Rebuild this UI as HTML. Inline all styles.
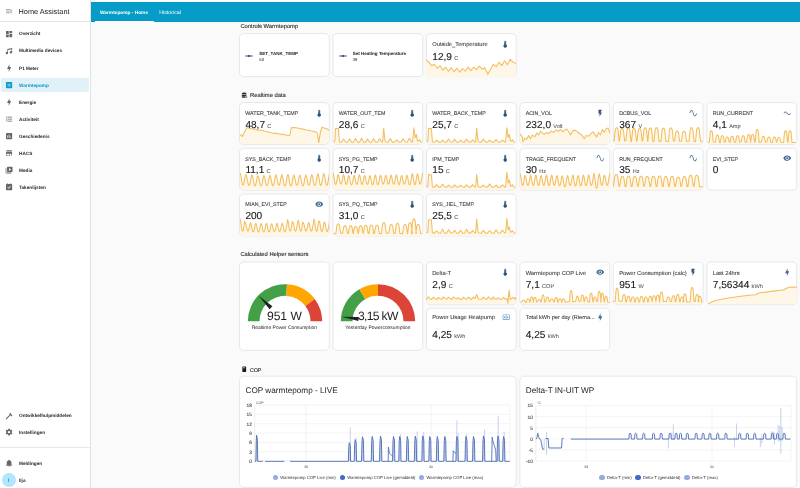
<!DOCTYPE html>
<html><head><meta charset="utf-8"><title>Home Assistant</title>
<style>
html,body{margin:0;padding:0}
#w{will-change:transform;position:absolute;left:0;top:0;width:800px;height:488px;overflow:hidden}
body{text-rendering:geometricPrecision;width:800px;height:488px;overflow:hidden;background:#fafafa;font-family:"Liberation Sans",sans-serif;color:#212121;position:relative}
#top{position:absolute;left:0;top:0;width:800px;height:2px;background:#fdfdfd}
#hdr{position:absolute;left:90.3px;top:2px;width:709.7px;height:19.7px;background:#069cc8;box-shadow:0 0.3px 0.8px rgba(0,0,0,0.22)}
#hdr .t1{position:absolute;left:9.7px;top:9.3px;transform:translateY(0.45px);font-size:4.8px;font-weight:bold;color:#fff;white-space:nowrap;line-height:6px}
#hdr .t2{position:absolute;left:68.9px;top:7.9px;transform:translateY(0.45px);font-size:5.3px;color:#fff;white-space:nowrap;line-height:6px}
#hdr .ind{position:absolute;left:4.6px;top:19px;width:59px;height:0.9px;background:#fff}
#sb{position:absolute;left:0;top:0;width:89.8px;height:488px;background:#fff;border-right:0.5px solid #e2e2e2}
#sb .hd{position:absolute;left:0;top:0;width:90px;height:21.3px;border-bottom:0.5px solid #e4e4e4}
#sb .ttl{position:absolute;left:18.5px;top:7.2px;font-size:7.35px;color:#212121;white-space:nowrap;line-height:9px}
.si{position:absolute;left:4.8px;width:8.2px;height:8.2px}
.st{position:absolute;left:19px;margin-top:0.9px;font-size:4.7px;font-weight:bold;color:#2a2a2a;white-space:nowrap;line-height:8px}
.sel{position:absolute;left:1.2px;width:87.400px;height:13.6px;background:#e0f2f8;border-radius:1.4px}
.div{position:absolute;left:0;width:90px;height:0.5px;background:#e8e8e8}
.av{position:absolute;left:1.9px;top:473.0px;width:13.8px;height:13.8px;border-radius:50%;background:#b3e5fc;color:#0d9ac4;font-size:5px;text-align:center;line-height:16.6px;font-weight:bold;overflow:hidden}
.sh{position:absolute;font-size:5.8px;color:#1f1f1f;-webkit-text-stroke:0.1px #1f1f1f;white-space:nowrap;line-height:7px}
.card{position:absolute;border-radius:4.2px;overflow:hidden}
#bg{position:absolute;left:0;top:0}
#bg rect{fill:#fff;stroke:#dedede;stroke-width:0.7}
.sp{position:absolute;left:0;top:0}
.ct{position:absolute;left:5.8px;top:8.6px;font-size:5.3px;color:#3e3e3e;-webkit-text-stroke:0.09px #3e3e3e;white-space:nowrap;line-height:7px}
.ic{position:absolute;right:5.7px;top:6.2px;width:8.4px;height:8.4px}
.cv{position:absolute;left:5.9px;top:15.7px;white-space:nowrap;line-height:12px}
.cv .v{font-size:10.1px;color:#1a1a1a;-webkit-text-stroke:0.12px #1a1a1a}
.cv .u{font-size:5.6px;color:#5a5a5a;-webkit-text-stroke:0.06px #5a5a5a;margin-left:2.3px}
.ng .ct{top:7.4px}
.ng .ic{top:5.2px}
.ng .cv{top:19.3px}
.ti{position:absolute;left:5.6px;top:17.95px;width:8px;height:8px}
.tn{position:absolute;left:19.7px;top:17.5px;font-size:4.55px;font-weight:bold;color:#212121;white-space:nowrap;line-height:6px}
.ts{position:absolute;left:19.8px;top:23.1px;font-size:4.2px;color:#1f1f1f;white-space:nowrap;line-height:5px}
.g{position:absolute;left:0;top:0}
.gv{position:absolute;left:0;width:89.8px;top:46.6px;text-align:center;font-size:12.1px;color:#1c1c1c;line-height:14px;white-space:nowrap}
.gl{position:absolute;left:0;width:89.8px;top:63.6px;text-align:center;font-size:4.95px;color:#212121;line-height:6px;white-space:nowrap}
.cht{position:absolute;left:6.0px;top:9.6px;font-size:8.2px;color:#1c1c1c;white-space:nowrap;line-height:10px}
.chs{position:absolute;left:0;top:0}
.ax{text-rendering:geometricPrecision;font-size:4.8px;fill:#474747;stroke:#474747;stroke-width:0.1px;font-family:"Liberation Sans",sans-serif}
.ax2{text-rendering:geometricPrecision;font-size:3.5px;fill:#444;font-family:"Liberation Sans",sans-serif}
.ld{position:absolute;top:98.7px;width:5.2px;height:5.2px;border-radius:50%}
.lt{position:absolute;top:98.9px;font-size:4.25px;color:#333;white-space:nowrap;line-height:5px}
</style></head><body><div id="w">
<div id="top"></div>
<div id="hdr"><div class="t1">Warmtepomp - Home</div><div class="t2">Historical</div><div class="ind"></div></div>
<div id="sb"><div class="hd"></div>
<svg style="position:absolute;left:4.8px;top:7.3px;width:8.4px;height:8.4px" viewBox="0 0 24 24"><path fill="#8e8e8e" d="M21 15.610L19.590 17l-5.010-5 5.010-5L21 8.390 17.440 12 21 15.610M3 6h13v2H3V6m0 7v-2h10v2H3m0 5v-2h13v2H3z"/></svg>
<div class="ttl">Home Assistant</div>
<svg class="si" style="top:29.5px" viewBox="0 0 24 24" fill="#666"><path d="M13 3v6h8V3m-8 18h8V11h-8M3 21h8v-6H3m0-2h8V3H3v10z"/></svg><div class="st" style="top:29.5px;">Overzicht</div><svg class="si" style="top:46.6px" viewBox="0 0 24 24" fill="#666"><path d="M21 3v12.500a3.500 3.500 0 1 1-2-3.160V6.470L9 8.600v8.900a3.500 3.500 0 1 1-2-3.160V6l14-3z"/></svg><div class="st" style="top:46.6px;">Multimedia devices</div><svg class="si" style="top:63.7px" viewBox="0 0 24 24" fill="#666"><path d="M11 15H6l7-14v8h5l-7 14v-8z"/></svg><div class="st" style="top:63.7px;">P1 Meter</div><div class="sel" style="top:78.0px"></div><svg class="si" style="top:80.8px" viewBox="0 0 24 24" fill="#0d9ac4"><path d="M19 3H5a2 2 0 0 0-2 2v14a2 2 0 0 0 2 2h14a2 2 0 0 0 2-2V5a2 2 0 0 0-2-2z"/><path fill="#5cc0dc" d="M7.500 7.500h9v9h-9z"/></svg><div class="st" style="top:80.8px;color:#0d9ac4;">Warmtepomp</div><svg class="si" style="top:97.9px" viewBox="0 0 24 24" fill="#666"><path d="M11 15H6l7-14v8h5l-7 14v-8z"/></svg><div class="st" style="top:97.9px;">Energie</div><svg class="si" style="top:115.0px" viewBox="0 0 24 24" fill="#666"><path d="M7 5h14v2H7V5m0 8v-2h14v2H7M4 4.500A1.500 1.500 0 1 1 4 7.500 1.500 1.500 0 0 1 4 4.500m0 6a1.500 1.500 0 1 1 0 3 1.500 1.500 0 0 1 0-3M7 19v-2h14v2H7m-3-3.500a1.500 1.500 0 1 1 0 3 1.500 1.500 0 0 1 0-3z"/></svg><div class="st" style="top:115.0px;">Activiteit</div><svg class="si" style="top:132.1px" viewBox="0 0 24 24" fill="#666"><path d="M19 3H5a2 2 0 0 0-2 2v14a2 2 0 0 0 2 2h14a2 2 0 0 0 2-2V5a2 2 0 0 0-2-2M9 17H7v-7h2v7m4 0h-2V7h2v10m4 0h-2v-4h2v4z"/></svg><div class="st" style="top:132.1px;">Geschiedenis</div><svg class="si" style="top:149.2px" viewBox="0 0 24 24" fill="#666"><path d="M20 4H4v2h16V4m1 10v-2l-1-5H4l-1 5v2h1v6h10v-6h4v6h2v-6h1m-9 4H6v-4h6v4z"/></svg><div class="st" style="top:149.2px;">HACS</div><svg class="si" style="top:166.3px" viewBox="0 0 24 24" fill="#666"><path d="M4 6H2v14a2 2 0 0 0 2 2h14v-2H4V6m16-4H8a2 2 0 0 0-2 2v12a2 2 0 0 0 2 2h12a2 2 0 0 0 2-2V4a2 2 0 0 0-2-2m-8 12.500v-9l6 4.500-6 4.500z"/></svg><div class="st" style="top:166.3px;">Media</div><svg class="si" style="top:183.4px" viewBox="0 0 24 24" fill="#666"><path d="M19 3h-1V1h-2v2H8V1H6v2H5a2 2 0 0 0-2 2v14a2 2 0 0 0 2 2h14a2 2 0 0 0 2-2V5a2 2 0 0 0-2-2m-8.500 14L7 13.500l1.400-1.400 2.100 2.100 5.100-5.100L17 10.500 10.500 17z"/></svg><div class="st" style="top:183.4px;">Takenlijsten</div><svg class="si" style="top:411.5px" viewBox="0 0 24 24" fill="#666"><path d="M2 19.630L13.430 8.200l-.71-.71 1.420-1.410L12 3.890c1.200-1.190 3.090-1.190 4.270 0l3.600 3.610-1.420 1.410h2.840l.71.710-3.550 3.590-.71-.71V9.620l-1.470 1.420-.71-.71L4.130 21.760 2 19.630z"/></svg><div class="st" style="top:411.5px;">Ontwikkelhulpmiddelen</div><svg class="si" style="top:428.3px" viewBox="0 0 24 24" fill="#666"><path d="M12 15.500A3.500 3.500 0 1 1 12 8.500a3.500 3.500 0 0 1 0 7m7.430-2.530c.04-.32.070-.64.070-.97s-.03-.66-.07-1l2.110-1.630c.19-.15.240-.42.120-.64l-2-3.460c-.12-.22-.39-.31-.61-.22l-2.490 1c-.52-.39-1.060-.73-1.690-.98l-.37-2.650A.506.506 0 0 0 14 2h-4c-.25 0-.46.180-.5.420l-.37 2.650c-.63.250-1.170.590-1.690.98l-2.490-1c-.22-.09-.49 0-.61.220l-2 3.460c-.13.220-.07.490.12.640L4.570 11c-.04.340-.07.670-.07 1s.03.650.07.970l-2.110 1.660c-.19.150-.25.420-.12.640l2 3.460c.12.220.39.300.61.220l2.490-1.010c.52.400 1.060.740 1.690.99l.37 2.650c.04.240.25.420.5.420h4c.25 0 .46-.18.500-.42l.37-2.650c.63-.26 1.170-.59 1.690-.99l2.490 1.010c.22.080.49 0 .61-.22l2-3.460c.12-.22.070-.49-.12-.64l-2.110-1.660z"/></svg><div class="st" style="top:428.3px;">Instellingen</div><svg class="si" style="top:459.0px" viewBox="0 0 24 24" fill="#666"><path d="M21 19v1H3v-1l2-2v-6c0-3.100 2.030-5.830 5-6.710V4a2 2 0 1 1 4 0v.290c2.970.880 5 3.610 5 6.710v6l2 2m-7 2a2 2 0 1 1-4 0"/></svg><div class="st" style="top:459.0px;">Meldingen</div>
<div class="div" style="top:447.1px"></div>
<div class="av">I</div>
<div class="st" style="top:476.4px">Ilja</div>
</div>
<svg id="bg" width="800" height="488" viewBox="0 0 800 488"><rect x="426.40" y="33.60" width="89.80" height="43.00" rx="4.2"/><rect x="239.50" y="102.55" width="89.80" height="41.85" rx="4.2"/><rect x="332.95" y="102.55" width="89.80" height="41.85" rx="4.2"/><rect x="426.40" y="102.55" width="89.80" height="41.85" rx="4.2"/><rect x="519.85" y="102.55" width="89.80" height="41.85" rx="4.2"/><rect x="613.35" y="102.55" width="89.80" height="41.85" rx="4.2"/><rect x="706.90" y="102.55" width="89.80" height="41.85" rx="4.2"/><rect x="239.50" y="148.30" width="89.80" height="41.85" rx="4.2"/><rect x="332.95" y="148.30" width="89.80" height="41.85" rx="4.2"/><rect x="426.40" y="148.30" width="89.80" height="41.85" rx="4.2"/><rect x="519.85" y="148.30" width="89.80" height="41.85" rx="4.2"/><rect x="613.35" y="148.30" width="89.80" height="41.85" rx="4.2"/><rect x="706.90" y="148.30" width="89.80" height="41.85" rx="4.2"/><rect x="239.50" y="194.00" width="89.80" height="41.85" rx="4.2"/><rect x="332.95" y="194.00" width="89.80" height="41.85" rx="4.2"/><rect x="426.40" y="194.00" width="89.80" height="41.85" rx="4.2"/><rect x="426.40" y="262.00" width="89.80" height="42.80" rx="4.2"/><rect x="519.85" y="262.00" width="89.80" height="42.80" rx="4.2"/><rect x="613.35" y="262.00" width="89.80" height="42.80" rx="4.2"/><rect x="706.90" y="262.00" width="89.80" height="42.80" rx="4.2"/><rect x="426.40" y="308.30" width="89.80" height="41.95" rx="4.2"/><rect x="519.85" y="308.30" width="89.80" height="41.95" rx="4.2"/><rect x="239.50" y="33.60" width="89.80" height="43.00" rx="4.2"/><rect x="332.95" y="33.60" width="89.80" height="43.00" rx="4.2"/><rect x="239.50" y="262.00" width="89.80" height="88.25" rx="4.2"/><rect x="332.95" y="262.00" width="89.80" height="88.25" rx="4.2"/><rect x="239.50" y="376.20" width="276.70" height="111.20" rx="4.2"/><rect x="519.85" y="376.20" width="276.85" height="111.20" rx="4.2"/></svg>
<div class="sh" style="left:240.4px;top:24.4px">Controls Warmtepomp</div>
<svg style="position:absolute;left:241.3px;top:91.6px;width:6.6px;height:6.6px" viewBox="0 0 24 24"><path fill="#2e2e2e" d="M3 7c0-3 3.500-5 8.500-5S20 4 20 7v2H3zM3 10.500h17V14c-2.500-.5-5 1-5.500 3.500H3zM3 19h11.500c.3 1 .8 1.800 1.500 2.500H6c-2 0-3-1-3-2.500z"/><circle cx="18.500" cy="18" r="2.800" fill="none" stroke="#2e2e2e" stroke-width="1.600"/><path stroke="#2e2e2e" stroke-width="2" d="M20.500 20.200l3 3"/></svg>
<div class="sh" style="left:250px;top:92.9px">Realtime data</div>
<div class="sh" style="left:240.4px;top:252.3px">Calculated Helper sensors</div>
<svg style="position:absolute;left:240.9px;top:365.6px;width:6.5px;height:6.5px" viewBox="0 0 24 24"><path fill="#1c1c1c" d="M7 1.500h10a2 2 0 0 1 2 2v17a2 2 0 0 1-2 2H7a2 2 0 0 1-2-2v-17a2 2 0 0 1 2-2m1.500 3.500v3h5V5z"/></svg>
<div class="sh" style="left:250px;top:367.5px;font-size:5.35px;letter-spacing:-0.1px">COP</div>
<div class="card" style="left:426.40px;top:33.60px;width:89.80px;height:43.00px"><svg class="sp" width="89.8" height="43" viewBox="0 0 89.8 43"><path d="M0.00,25.70 L2.81,28.20 L5.61,31.70 L8.42,30.20 L11.22,34.20 L14.03,31.70 L16.84,36.20 L19.64,33.20 L22.45,37.20 L25.26,33.70 L28.06,37.70 L30.87,34.20 L33.67,38.20 L36.48,34.70 L39.29,37.20 L42.09,33.20 L44.90,36.70 L47.71,33.20 L50.51,35.70 L53.32,32.20 L56.12,35.20 L58.93,33.70 L61.74,40.20 L64.54,35.20 L67.35,30.20 L70.16,32.70 L72.96,28.20 L75.77,31.70 L78.58,26.70 L81.38,30.70 L84.19,25.20 L86.99,28.20 L89.80,29.20 L89.80,44.00 L0,44.00 Z" fill="#fef6e7"/><path d="M0.00,25.70 L2.81,28.20 L5.61,31.70 L8.42,30.20 L11.22,34.20 L14.03,31.70 L16.84,36.20 L19.64,33.20 L22.45,37.20 L25.26,33.70 L28.06,37.70 L30.87,34.20 L33.67,38.20 L36.48,34.70 L39.29,37.20 L42.09,33.20 L44.90,36.70 L47.71,33.20 L50.51,35.70 L53.32,32.20 L56.12,35.20 L58.93,33.70 L61.74,40.20 L64.54,35.20 L67.35,30.20 L70.16,32.70 L72.96,28.20 L75.77,31.70 L78.58,26.70 L81.38,30.70 L84.19,25.20 L86.99,28.20 L89.80,29.20" fill="none" stroke="#f3bd5c" stroke-width="1.05" stroke-linejoin="round" stroke-linecap="round"/></svg><div class="ct" style="font-size:5.78px;margin-top:0.3px;">Outside_Temperature</div><svg class="ic" style="margin-right:0.7px" viewBox="0 0 24 24"><path fill="#5580aa" d="M15 13V5a3 3 0 0 0-6 0v8a5 5 0 1 0 6 0z"/><circle cx="12" cy="17" r="4.300" fill="#31506f"/><path fill="#31506f" d="M10.800 8h2.400v8h-2.400z"/></svg><div class="cv" style="margin-top:1px"><span class="v">12,9</span><span class="u">C</span></div></div>
<div class="card" style="left:239.50px;top:102.55px;width:89.80px;height:41.85px"><svg class="sp" width="89.8" height="41.85" viewBox="0 0 89.8 41.85"><path d="M0.00,31.50 L2.50,33.40 L4.50,29.00 L6.90,24.60 L9.00,25.30 L12.50,25.90 L15.00,26.00 L18.00,27.20 L21.00,27.30 L23.70,28.00 L27.00,28.60 L30.00,29.50 L33.70,30.30 L37.00,30.40 L40.00,31.20 L43.00,31.40 L46.20,32.00 L48.70,32.80 L50.00,32.00 L51.20,24.80 L54.00,24.50 L57.50,25.00 L60.00,25.80 L62.50,25.90 L66.00,27.00 L69.00,27.30 L71.20,28.00 L74.00,28.60 L76.20,29.10 L77.50,30.50 L78.70,39.60 L80.30,30.00 L81.90,24.20 L84.00,24.90 L86.50,25.60 L88.50,26.80 L89.80,27.20 L89.80,42.85 L0,42.85 Z" fill="#fef6e7"/><path d="M0.00,31.50 L2.50,33.40 L4.50,29.00 L6.90,24.60 L9.00,25.30 L12.50,25.90 L15.00,26.00 L18.00,27.20 L21.00,27.30 L23.70,28.00 L27.00,28.60 L30.00,29.50 L33.70,30.30 L37.00,30.40 L40.00,31.20 L43.00,31.40 L46.20,32.00 L48.70,32.80 L50.00,32.00 L51.20,24.80 L54.00,24.50 L57.50,25.00 L60.00,25.80 L62.50,25.90 L66.00,27.00 L69.00,27.30 L71.20,28.00 L74.00,28.60 L76.20,29.10 L77.50,30.50 L78.70,39.60 L80.30,30.00 L81.90,24.20 L84.00,24.90 L86.50,25.60 L88.50,26.80 L89.80,27.20" fill="none" stroke="#f3bd5c" stroke-width="1.05" stroke-linejoin="round" stroke-linecap="round"/></svg><div class="ct">WATER_TANK_TEMP</div><svg class="ic" style="margin-right:0.7px" viewBox="0 0 24 24"><path fill="#5580aa" d="M15 13V5a3 3 0 0 0-6 0v8a5 5 0 1 0 6 0z"/><circle cx="12" cy="17" r="4.300" fill="#31506f"/><path fill="#31506f" d="M10.800 8h2.400v8h-2.400z"/></svg><div class="cv"><span class="v">48,7</span><span class="u">C</span></div></div>
<div class="card" style="left:332.95px;top:102.55px;width:89.80px;height:41.85px"><svg class="sp" width="89.8" height="41.85" viewBox="0 0 89.8 41.85"><path d="M0.00,38.80 L1.80,38.30 L2.60,25.20 L5.40,25.60 L6.40,39.00 L8.50,39.25 L10.60,35.99 L12.70,39.19 L14.50,39.18 L16.60,35.86 L18.70,39.28 L20.50,39.30 L22.60,35.50 L24.70,39.22 L26.50,39.25 L28.60,35.23 L30.70,39.16 L32.50,39.13 L34.60,36.11 L36.70,39.11 L38.50,39.27 L40.60,35.84 L42.70,39.04 L44.50,39.20 L46.60,35.66 L48.70,39.10 L49.60,39.00 L50.70,25.40 L52.00,37.80 L53.00,39.10 L55.09,39.29 L57.33,35.63 L59.56,39.12 L61.47,39.24 L63.70,36.87 L65.93,39.04 L67.84,39.21 L70.08,35.70 L72.31,39.04 L74.22,39.16 L76.45,35.35 L78.68,39.18 L79.60,38.80 L80.90,24.80 L82.20,34.50 L83.40,31.50 L84.60,38.30 L86.50,36.80 L88.00,39.00 L89.80,39.30 L89.80,42.85 L0,42.85 Z" fill="#fef6e7"/><path d="M0.00,38.80 L1.80,38.30 L2.60,25.20 L5.40,25.60 L6.40,39.00 L8.50,39.25 L10.60,35.99 L12.70,39.19 L14.50,39.18 L16.60,35.86 L18.70,39.28 L20.50,39.30 L22.60,35.50 L24.70,39.22 L26.50,39.25 L28.60,35.23 L30.70,39.16 L32.50,39.13 L34.60,36.11 L36.70,39.11 L38.50,39.27 L40.60,35.84 L42.70,39.04 L44.50,39.20 L46.60,35.66 L48.70,39.10 L49.60,39.00 L50.70,25.40 L52.00,37.80 L53.00,39.10 L55.09,39.29 L57.33,35.63 L59.56,39.12 L61.47,39.24 L63.70,36.87 L65.93,39.04 L67.84,39.21 L70.08,35.70 L72.31,39.04 L74.22,39.16 L76.45,35.35 L78.68,39.18 L79.60,38.80 L80.90,24.80 L82.20,34.50 L83.40,31.50 L84.60,38.30 L86.50,36.80 L88.00,39.00 L89.80,39.30" fill="none" stroke="#f3bd5c" stroke-width="1.05" stroke-linejoin="round" stroke-linecap="round"/></svg><div class="ct">WATER_OUT_TEM</div><svg class="ic" style="margin-right:0.7px" viewBox="0 0 24 24"><path fill="#5580aa" d="M15 13V5a3 3 0 0 0-6 0v8a5 5 0 1 0 6 0z"/><circle cx="12" cy="17" r="4.300" fill="#31506f"/><path fill="#31506f" d="M10.800 8h2.400v8h-2.400z"/></svg><div class="cv"><span class="v">28,6</span><span class="u">C</span></div></div>
<div class="card" style="left:426.40px;top:102.55px;width:89.80px;height:41.85px"><svg class="sp" width="89.8" height="41.85" viewBox="0 0 89.8 41.85"><path d="M0.00,38.80 L1.80,38.30 L2.60,25.20 L5.40,25.60 L6.40,39.00 L8.50,39.25 L10.60,37.05 L12.70,39.18 L14.50,39.27 L16.60,37.10 L18.70,39.18 L20.50,39.12 L22.60,36.00 L24.70,39.07 L26.50,39.26 L28.60,36.39 L30.70,39.22 L32.50,39.27 L34.60,37.04 L36.70,39.24 L38.50,39.11 L40.60,35.96 L42.70,39.06 L44.50,39.14 L46.60,36.91 L48.70,39.21 L49.60,39.00 L50.70,25.40 L52.00,37.80 L53.00,39.10 L55.09,39.17 L57.33,36.10 L59.56,39.04 L61.47,39.12 L63.70,37.07 L65.93,39.12 L67.84,39.17 L70.08,36.44 L72.31,39.25 L74.22,39.21 L76.45,37.07 L78.68,39.02 L79.60,38.80 L80.90,24.80 L82.20,34.50 L83.40,31.50 L84.60,38.30 L86.50,36.80 L88.00,39.00 L89.80,39.30 L89.80,42.85 L0,42.85 Z" fill="#fef6e7"/><path d="M0.00,38.80 L1.80,38.30 L2.60,25.20 L5.40,25.60 L6.40,39.00 L8.50,39.25 L10.60,37.05 L12.70,39.18 L14.50,39.27 L16.60,37.10 L18.70,39.18 L20.50,39.12 L22.60,36.00 L24.70,39.07 L26.50,39.26 L28.60,36.39 L30.70,39.22 L32.50,39.27 L34.60,37.04 L36.70,39.24 L38.50,39.11 L40.60,35.96 L42.70,39.06 L44.50,39.14 L46.60,36.91 L48.70,39.21 L49.60,39.00 L50.70,25.40 L52.00,37.80 L53.00,39.10 L55.09,39.17 L57.33,36.10 L59.56,39.04 L61.47,39.12 L63.70,37.07 L65.93,39.12 L67.84,39.17 L70.08,36.44 L72.31,39.25 L74.22,39.21 L76.45,37.07 L78.68,39.02 L79.60,38.80 L80.90,24.80 L82.20,34.50 L83.40,31.50 L84.60,38.30 L86.50,36.80 L88.00,39.00 L89.80,39.30" fill="none" stroke="#f3bd5c" stroke-width="1.05" stroke-linejoin="round" stroke-linecap="round"/></svg><div class="ct">WATER_BACK_TEMP</div><svg class="ic" style="margin-right:0.7px" viewBox="0 0 24 24"><path fill="#5580aa" d="M15 13V5a3 3 0 0 0-6 0v8a5 5 0 1 0 6 0z"/><circle cx="12" cy="17" r="4.300" fill="#31506f"/><path fill="#31506f" d="M10.800 8h2.400v8h-2.400z"/></svg><div class="cv"><span class="v">25,7</span><span class="u">C</span></div></div>
<div class="card" style="left:519.85px;top:102.55px;width:89.80px;height:41.85px"><svg class="sp" width="89.8" height="41.85" viewBox="0 0 89.8 41.85"><path d="M0.00,31.95 L0.50,31.32 L2.38,34.45 L3.00,38.83 L4.88,35.08 L6.75,36.33 L8.62,32.58 L10.50,35.70 L12.38,31.95 L14.88,33.83 L16.75,30.07 L18.62,31.95 L20.50,28.20 L22.38,30.07 L24.25,31.32 L26.75,29.45 L28.62,30.70 L31.12,28.20 L33.62,29.45 L36.12,26.95 L38.62,28.20 L40.50,26.32 L43.00,28.82 L44.88,26.95 L46.75,25.95 L49.25,29.45 L50.50,31.95 L52.38,28.20 L54.25,26.95 L56.75,28.20 L58.62,30.07 L61.12,31.32 L63.00,33.83 L64.25,35.70 L66.12,32.58 L68.62,33.20 L71.12,30.70 L73.00,28.82 L74.88,31.32 L76.75,33.83 L78.62,29.45 L80.50,31.95 L82.38,26.32 L84.25,29.45 L86.12,25.70 L88.00,25.07 L89.88,30.07 L89.80,42.85 L0,42.85 Z" fill="#fef6e7"/><path d="M0.00,31.95 L0.50,31.32 L2.38,34.45 L3.00,38.83 L4.88,35.08 L6.75,36.33 L8.62,32.58 L10.50,35.70 L12.38,31.95 L14.88,33.83 L16.75,30.07 L18.62,31.95 L20.50,28.20 L22.38,30.07 L24.25,31.32 L26.75,29.45 L28.62,30.70 L31.12,28.20 L33.62,29.45 L36.12,26.95 L38.62,28.20 L40.50,26.32 L43.00,28.82 L44.88,26.95 L46.75,25.95 L49.25,29.45 L50.50,31.95 L52.38,28.20 L54.25,26.95 L56.75,28.20 L58.62,30.07 L61.12,31.32 L63.00,33.83 L64.25,35.70 L66.12,32.58 L68.62,33.20 L71.12,30.70 L73.00,28.82 L74.88,31.32 L76.75,33.83 L78.62,29.45 L80.50,31.95 L82.38,26.32 L84.25,29.45 L86.12,25.70 L88.00,25.07 L89.88,30.07" fill="none" stroke="#f3bd5c" stroke-width="1.05" stroke-linejoin="round" stroke-linecap="round"/></svg><div class="ct">ACIN_VOL</div><svg class="ic" viewBox="0 0 24 24"><path fill="#38557a" d="M7 2v11h3v9l7-12h-4l4-8H7z"/></svg><div class="cv"><span class="v">232,0</span><span class="u">Volt</span></div></div>
<div class="card" style="left:613.35px;top:102.55px;width:89.80px;height:41.85px"><svg class="sp" width="89.8" height="41.85" viewBox="0 0 89.8 41.85"><path d="M0.00,37.50 L1.10,38.10 L2.23,26.87 L3.10,24.80 L4.10,24.80 L4.97,26.87 L6.10,38.01 L6.60,37.96 L7.72,27.38 L8.60,25.40 L9.60,25.40 L10.47,27.38 L11.60,37.85 L12.90,38.01 L14.03,26.87 L14.90,24.80 L15.90,24.80 L16.77,26.87 L17.90,37.86 L18.50,38.58 L19.62,27.21 L20.50,25.20 L21.50,25.20 L22.38,27.21 L23.50,38.23 L24.10,37.85 L25.23,27.55 L26.10,25.60 L27.10,25.60 L27.98,27.55 L29.10,38.08 L29.70,37.88 L30.83,26.95 L31.70,24.90 L32.70,24.90 L33.58,26.95 L34.70,38.51 L34.80,38.22 L35.92,27.04 L36.80,25.00 L37.80,25.00 L38.67,27.04 L39.80,38.40 L41.00,38.16 L42.12,26.87 L43.00,24.80 L44.00,24.80 L44.88,26.87 L46.00,38.14 L47.90,38.59 L49.02,27.30 L49.90,25.30 L50.90,25.30 L51.77,27.30 L52.90,38.43 L55.40,38.38 L56.52,27.04 L57.40,25.00 L58.40,25.00 L59.27,27.04 L60.40,37.87 L61.60,37.99 L62.72,29.59 L63.60,28.00 L64.60,28.00 L65.47,29.59 L66.60,38.47 L68.50,37.96 L69.62,29.76 L70.50,28.20 L71.50,28.20 L72.38,29.76 L73.50,38.49 L76.00,38.11 L77.12,26.87 L78.00,24.80 L79.00,24.80 L79.88,26.87 L81.00,38.50 L82.50,38.60 L83.62,26.79 L84.50,24.70 L85.50,24.70 L86.38,26.79 L87.50,37.90 L89.80,38.60 L89.80,42.85 L0,42.85 Z" fill="#fef6e7"/><path d="M0.00,37.50 L1.10,38.10 L2.23,26.87 L3.10,24.80 L4.10,24.80 L4.97,26.87 L6.10,38.01 L6.60,37.96 L7.72,27.38 L8.60,25.40 L9.60,25.40 L10.47,27.38 L11.60,37.85 L12.90,38.01 L14.03,26.87 L14.90,24.80 L15.90,24.80 L16.77,26.87 L17.90,37.86 L18.50,38.58 L19.62,27.21 L20.50,25.20 L21.50,25.20 L22.38,27.21 L23.50,38.23 L24.10,37.85 L25.23,27.55 L26.10,25.60 L27.10,25.60 L27.98,27.55 L29.10,38.08 L29.70,37.88 L30.83,26.95 L31.70,24.90 L32.70,24.90 L33.58,26.95 L34.70,38.51 L34.80,38.22 L35.92,27.04 L36.80,25.00 L37.80,25.00 L38.67,27.04 L39.80,38.40 L41.00,38.16 L42.12,26.87 L43.00,24.80 L44.00,24.80 L44.88,26.87 L46.00,38.14 L47.90,38.59 L49.02,27.30 L49.90,25.30 L50.90,25.30 L51.77,27.30 L52.90,38.43 L55.40,38.38 L56.52,27.04 L57.40,25.00 L58.40,25.00 L59.27,27.04 L60.40,37.87 L61.60,37.99 L62.72,29.59 L63.60,28.00 L64.60,28.00 L65.47,29.59 L66.60,38.47 L68.50,37.96 L69.62,29.76 L70.50,28.20 L71.50,28.20 L72.38,29.76 L73.50,38.49 L76.00,38.11 L77.12,26.87 L78.00,24.80 L79.00,24.80 L79.88,26.87 L81.00,38.50 L82.50,38.60 L83.62,26.79 L84.50,24.70 L85.50,24.70 L86.38,26.79 L87.50,37.90 L89.80,38.60" fill="none" stroke="#f3bd5c" stroke-width="1.05" stroke-linejoin="round" stroke-linecap="round"/></svg><div class="ct">DCBUS_VOL</div><svg class="ic" viewBox="0 0 24 24"><path fill="#416690" d="M16.500 21c-3 0-4.190-4.240-5.450-8.720C10.140 9.040 9 5 7.500 5 4.110 5 4 11.930 4 12H2c0-.37.060-9 5.500-9 3 0 4.210 4.250 5.470 8.740C13.830 14.800 15 19 16.500 19c3.440 0 3.530-6.930 3.530-7h2c0 .37-.06 9-5.530 9z"/></svg><div class="cv"><span class="v">367</span><span class="u">V</span></div></div>
<div class="card" style="left:706.90px;top:102.55px;width:89.80px;height:41.85px"><svg class="sp" width="89.8" height="41.85" viewBox="0 0 89.8 41.85"><path d="M0.00,39.60 L2.30,38.97 L3.20,29.57 L3.90,27.80 L4.70,27.80 L5.40,29.57 L6.30,38.94 L8.40,39.21 L9.30,33.23 L10.00,32.10 L10.80,32.10 L11.50,33.23 L12.40,39.39 L13.30,39.60 L14.20,33.82 L14.90,32.80 L15.70,32.80 L16.40,33.82 L17.30,39.07 L18.20,39.22 L19.10,34.84 L19.80,34.00 L20.60,34.00 L21.30,34.84 L22.20,38.99 L23.10,39.30 L24.00,34.33 L24.70,33.40 L25.50,33.40 L26.20,34.33 L27.10,38.98 L28.60,39.38 L29.50,33.82 L30.20,32.80 L31.00,32.80 L31.70,33.82 L32.60,38.96 L34.20,39.02 L35.10,33.82 L35.80,32.80 L36.60,32.80 L37.30,33.82 L38.20,39.27 L39.70,39.17 L40.60,32.72 L41.30,31.50 L42.10,31.50 L42.80,32.72 L43.70,39.05 L43.60,39.45 L44.50,32.72 L45.20,31.50 L46.00,31.50 L46.70,32.72 L47.60,39.16 L48.20,38.96 L49.10,28.55 L49.80,26.60 L50.60,26.60 L51.30,28.55 L52.20,39.39 L54.40,38.96 L55.30,34.33 L56.00,33.40 L56.80,33.40 L57.50,34.33 L58.40,39.05 L59.90,38.92 L60.80,34.84 L61.50,34.00 L62.30,34.00 L63.00,34.84 L63.90,39.33 L65.40,39.53 L66.30,34.84 L67.00,34.00 L67.80,34.00 L68.50,34.84 L69.40,38.96 L69.90,38.96 L70.80,35.27 L71.50,34.50 L72.30,34.50 L73.00,35.27 L73.90,39.24 L76.60,39.52 L77.50,29.57 L78.20,27.80 L79.00,27.80 L79.70,29.57 L80.60,39.44 L81.00,39.09 L81.90,29.57 L82.60,27.80 L83.40,27.80 L84.10,29.57 L85.00,39.37 L89.80,39.60 L89.80,42.85 L0,42.85 Z" fill="#fef6e7"/><path d="M0.00,39.60 L2.30,38.97 L3.20,29.57 L3.90,27.80 L4.70,27.80 L5.40,29.57 L6.30,38.94 L8.40,39.21 L9.30,33.23 L10.00,32.10 L10.80,32.10 L11.50,33.23 L12.40,39.39 L13.30,39.60 L14.20,33.82 L14.90,32.80 L15.70,32.80 L16.40,33.82 L17.30,39.07 L18.20,39.22 L19.10,34.84 L19.80,34.00 L20.60,34.00 L21.30,34.84 L22.20,38.99 L23.10,39.30 L24.00,34.33 L24.70,33.40 L25.50,33.40 L26.20,34.33 L27.10,38.98 L28.60,39.38 L29.50,33.82 L30.20,32.80 L31.00,32.80 L31.70,33.82 L32.60,38.96 L34.20,39.02 L35.10,33.82 L35.80,32.80 L36.60,32.80 L37.30,33.82 L38.20,39.27 L39.70,39.17 L40.60,32.72 L41.30,31.50 L42.10,31.50 L42.80,32.72 L43.70,39.05 L43.60,39.45 L44.50,32.72 L45.20,31.50 L46.00,31.50 L46.70,32.72 L47.60,39.16 L48.20,38.96 L49.10,28.55 L49.80,26.60 L50.60,26.60 L51.30,28.55 L52.20,39.39 L54.40,38.96 L55.30,34.33 L56.00,33.40 L56.80,33.40 L57.50,34.33 L58.40,39.05 L59.90,38.92 L60.80,34.84 L61.50,34.00 L62.30,34.00 L63.00,34.84 L63.90,39.33 L65.40,39.53 L66.30,34.84 L67.00,34.00 L67.80,34.00 L68.50,34.84 L69.40,38.96 L69.90,38.96 L70.80,35.27 L71.50,34.50 L72.30,34.50 L73.00,35.27 L73.90,39.24 L76.60,39.52 L77.50,29.57 L78.20,27.80 L79.00,27.80 L79.70,29.57 L80.60,39.44 L81.00,39.09 L81.90,29.57 L82.60,27.80 L83.40,27.80 L84.10,29.57 L85.00,39.37 L89.80,39.60" fill="none" stroke="#f3bd5c" stroke-width="1.05" stroke-linejoin="round" stroke-linecap="round"/></svg><div class="ct">RUN_CURRENT</div><svg class="ic" viewBox="0 0 24 24"><path fill="#416690" d="M12.430 11C12.280 10.840 10 7 7 7s-5 3-5 5h2c0-1.100 1.100-3 3-3 1.830 0 3.270 2.040 4.570 4 .15.160 2.430 4 5.430 4s5-3 5-5h-2c0 1.100-1.100 3-3 3-1.830 0-3.270-2.040-4.570-4z"/></svg><div class="cv"><span class="v">4,1</span><span class="u">Amp</span></div></div>
<div class="card" style="left:239.50px;top:148.30px;width:89.80px;height:41.85px"><svg class="sp" width="89.8" height="41.85" viewBox="0 0 89.8 41.85"><path d="M0.00,24.90 L0.75,27.10 L1.50,32.01 L2.25,36.05 L2.99,37.16 L3.74,36.05 L4.49,32.01 L5.24,27.10 L5.99,26.68 L6.73,28.60 L7.48,32.90 L8.23,36.44 L8.98,37.41 L9.73,36.44 L10.48,32.90 L11.22,28.60 L11.97,26.62 L12.72,28.64 L13.47,33.13 L14.22,36.84 L14.97,37.86 L15.71,36.84 L16.46,33.13 L17.21,28.64 L17.96,27.89 L18.71,29.69 L19.46,33.69 L20.20,36.99 L20.95,37.90 L21.70,36.99 L22.45,33.69 L23.20,29.69 L23.95,27.39 L24.70,29.24 L25.44,33.34 L26.19,36.72 L26.94,37.65 L27.69,36.72 L28.44,33.34 L29.18,29.24 L29.93,27.13 L30.68,29.01 L31.43,33.21 L32.18,36.67 L32.93,37.62 L33.67,36.67 L34.42,33.21 L35.17,29.01 L35.92,26.77 L36.67,28.66 L37.42,32.87 L38.16,36.34 L38.91,37.29 L39.66,36.34 L40.41,32.87 L41.16,28.66 L41.91,26.62 L42.66,28.64 L43.40,33.14 L44.15,36.85 L44.90,37.87 L45.65,36.85 L46.40,33.14 L47.14,28.64 L47.89,26.53 L48.64,28.56 L49.39,33.08 L50.14,36.82 L50.89,37.84 L51.63,36.82 L52.38,33.08 L53.13,28.56 L53.88,27.07 L54.63,28.89 L55.38,32.95 L56.12,36.30 L56.87,37.22 L57.62,36.30 L58.37,32.95 L59.12,28.89 L59.87,27.03 L60.61,29.00 L61.36,33.38 L62.11,37.00 L62.86,37.99 L63.61,37.00 L64.36,33.38 L65.10,29.00 L65.85,26.86 L66.60,28.70 L67.35,32.81 L68.10,36.20 L68.85,37.13 L69.59,36.20 L70.34,32.81 L71.09,28.70 L71.84,26.59 L72.59,28.55 L73.34,32.91 L74.08,36.51 L74.83,37.50 L75.58,36.51 L76.33,32.91 L77.08,28.55 L77.83,25.60 L78.58,27.73 L79.32,32.47 L80.07,36.38 L80.82,37.46 L81.57,36.38 L82.32,32.47 L83.06,27.73 L83.81,25.30 L84.56,27.48 L85.31,32.33 L86.06,36.33 L86.81,37.43 L87.55,36.33 L88.30,32.33 L89.05,27.48 L89.80,24.90 L89.80,42.85 L0,42.85 Z" fill="#fef6e7"/><path d="M0.00,24.90 L0.75,27.10 L1.50,32.01 L2.25,36.05 L2.99,37.16 L3.74,36.05 L4.49,32.01 L5.24,27.10 L5.99,26.68 L6.73,28.60 L7.48,32.90 L8.23,36.44 L8.98,37.41 L9.73,36.44 L10.48,32.90 L11.22,28.60 L11.97,26.62 L12.72,28.64 L13.47,33.13 L14.22,36.84 L14.97,37.86 L15.71,36.84 L16.46,33.13 L17.21,28.64 L17.96,27.89 L18.71,29.69 L19.46,33.69 L20.20,36.99 L20.95,37.90 L21.70,36.99 L22.45,33.69 L23.20,29.69 L23.95,27.39 L24.70,29.24 L25.44,33.34 L26.19,36.72 L26.94,37.65 L27.69,36.72 L28.44,33.34 L29.18,29.24 L29.93,27.13 L30.68,29.01 L31.43,33.21 L32.18,36.67 L32.93,37.62 L33.67,36.67 L34.42,33.21 L35.17,29.01 L35.92,26.77 L36.67,28.66 L37.42,32.87 L38.16,36.34 L38.91,37.29 L39.66,36.34 L40.41,32.87 L41.16,28.66 L41.91,26.62 L42.66,28.64 L43.40,33.14 L44.15,36.85 L44.90,37.87 L45.65,36.85 L46.40,33.14 L47.14,28.64 L47.89,26.53 L48.64,28.56 L49.39,33.08 L50.14,36.82 L50.89,37.84 L51.63,36.82 L52.38,33.08 L53.13,28.56 L53.88,27.07 L54.63,28.89 L55.38,32.95 L56.12,36.30 L56.87,37.22 L57.62,36.30 L58.37,32.95 L59.12,28.89 L59.87,27.03 L60.61,29.00 L61.36,33.38 L62.11,37.00 L62.86,37.99 L63.61,37.00 L64.36,33.38 L65.10,29.00 L65.85,26.86 L66.60,28.70 L67.35,32.81 L68.10,36.20 L68.85,37.13 L69.59,36.20 L70.34,32.81 L71.09,28.70 L71.84,26.59 L72.59,28.55 L73.34,32.91 L74.08,36.51 L74.83,37.50 L75.58,36.51 L76.33,32.91 L77.08,28.55 L77.83,25.60 L78.58,27.73 L79.32,32.47 L80.07,36.38 L80.82,37.46 L81.57,36.38 L82.32,32.47 L83.06,27.73 L83.81,25.30 L84.56,27.48 L85.31,32.33 L86.06,36.33 L86.81,37.43 L87.55,36.33 L88.30,32.33 L89.05,27.48 L89.80,24.90" fill="none" stroke="#f3bd5c" stroke-width="1.05" stroke-linejoin="round" stroke-linecap="round"/></svg><div class="ct">SYS_BACK_TEMP</div><svg class="ic" style="margin-right:0.7px" viewBox="0 0 24 24"><path fill="#5580aa" d="M15 13V5a3 3 0 0 0-6 0v8a5 5 0 1 0 6 0z"/><circle cx="12" cy="17" r="4.300" fill="#31506f"/><path fill="#31506f" d="M10.800 8h2.400v8h-2.400z"/></svg><div class="cv" style="margin-top:-0.5px"><span class="v">11,1</span><span class="u">C</span></div></div>
<div class="card" style="left:332.95px;top:148.30px;width:89.80px;height:41.85px"><svg class="sp" width="89.8" height="41.85" viewBox="0 0 89.8 41.85"><path d="M0.00,25.20 L0.66,27.24 L1.32,31.79 L1.98,35.55 L2.64,36.58 L3.30,35.55 L3.96,31.79 L4.62,27.24 L5.28,26.77 L5.94,28.46 L6.60,32.21 L7.26,35.30 L7.92,36.15 L8.58,35.30 L9.24,32.21 L9.90,28.46 L10.56,26.61 L11.22,28.38 L11.89,32.32 L12.55,35.57 L13.21,36.46 L13.87,35.57 L14.53,32.32 L15.19,28.38 L15.85,27.71 L16.51,29.35 L17.17,33.00 L17.83,36.00 L18.49,36.83 L19.15,36.00 L19.81,33.00 L20.47,29.35 L21.13,27.29 L21.79,28.92 L22.45,32.55 L23.11,35.54 L23.77,36.37 L24.43,35.54 L25.09,32.55 L25.75,28.92 L26.41,26.65 L27.07,28.43 L27.73,32.40 L28.39,35.67 L29.05,36.57 L29.71,35.67 L30.37,32.40 L31.03,28.43 L31.69,27.47 L32.35,29.09 L33.01,32.71 L33.67,35.69 L34.34,36.51 L35.00,35.69 L35.66,32.71 L36.32,29.09 L36.98,27.50 L37.64,29.16 L38.30,32.87 L38.96,35.92 L39.62,36.76 L40.28,35.92 L40.94,32.87 L41.60,29.16 L42.26,26.89 L42.92,28.67 L43.58,32.64 L44.24,35.91 L44.90,36.80 L45.56,35.91 L46.22,32.64 L46.88,28.67 L47.54,27.23 L48.20,28.82 L48.86,32.37 L49.52,35.30 L50.18,36.10 L50.84,35.30 L51.50,32.37 L52.16,28.82 L52.82,27.33 L53.48,28.93 L54.14,32.49 L54.80,35.42 L55.46,36.23 L56.12,35.42 L56.79,32.49 L57.45,28.93 L58.11,27.07 L58.77,28.72 L59.43,32.39 L60.09,35.42 L60.75,36.25 L61.41,35.42 L62.07,32.39 L62.73,28.72 L63.39,26.73 L64.05,28.51 L64.71,32.48 L65.37,35.75 L66.03,36.65 L66.69,35.75 L67.35,32.48 L68.01,28.51 L68.67,27.43 L69.33,29.02 L69.99,32.56 L70.65,35.47 L71.31,36.27 L71.97,35.47 L72.63,32.56 L73.29,29.02 L73.95,27.12 L74.61,28.86 L75.27,32.74 L75.93,35.95 L76.59,36.82 L77.25,35.95 L77.91,32.74 L78.58,28.86 L79.24,25.40 L79.90,27.43 L80.56,31.96 L81.22,35.69 L81.88,36.72 L82.54,35.69 L83.20,31.96 L83.86,27.43 L84.52,25.80 L85.18,27.67 L85.84,31.83 L86.50,35.26 L87.16,36.20 L87.82,35.26 L88.48,31.83 L89.14,27.67 L89.80,25.20 L89.80,42.85 L0,42.85 Z" fill="#fef6e7"/><path d="M0.00,25.20 L0.66,27.24 L1.32,31.79 L1.98,35.55 L2.64,36.58 L3.30,35.55 L3.96,31.79 L4.62,27.24 L5.28,26.77 L5.94,28.46 L6.60,32.21 L7.26,35.30 L7.92,36.15 L8.58,35.30 L9.24,32.21 L9.90,28.46 L10.56,26.61 L11.22,28.38 L11.89,32.32 L12.55,35.57 L13.21,36.46 L13.87,35.57 L14.53,32.32 L15.19,28.38 L15.85,27.71 L16.51,29.35 L17.17,33.00 L17.83,36.00 L18.49,36.83 L19.15,36.00 L19.81,33.00 L20.47,29.35 L21.13,27.29 L21.79,28.92 L22.45,32.55 L23.11,35.54 L23.77,36.37 L24.43,35.54 L25.09,32.55 L25.75,28.92 L26.41,26.65 L27.07,28.43 L27.73,32.40 L28.39,35.67 L29.05,36.57 L29.71,35.67 L30.37,32.40 L31.03,28.43 L31.69,27.47 L32.35,29.09 L33.01,32.71 L33.67,35.69 L34.34,36.51 L35.00,35.69 L35.66,32.71 L36.32,29.09 L36.98,27.50 L37.64,29.16 L38.30,32.87 L38.96,35.92 L39.62,36.76 L40.28,35.92 L40.94,32.87 L41.60,29.16 L42.26,26.89 L42.92,28.67 L43.58,32.64 L44.24,35.91 L44.90,36.80 L45.56,35.91 L46.22,32.64 L46.88,28.67 L47.54,27.23 L48.20,28.82 L48.86,32.37 L49.52,35.30 L50.18,36.10 L50.84,35.30 L51.50,32.37 L52.16,28.82 L52.82,27.33 L53.48,28.93 L54.14,32.49 L54.80,35.42 L55.46,36.23 L56.12,35.42 L56.79,32.49 L57.45,28.93 L58.11,27.07 L58.77,28.72 L59.43,32.39 L60.09,35.42 L60.75,36.25 L61.41,35.42 L62.07,32.39 L62.73,28.72 L63.39,26.73 L64.05,28.51 L64.71,32.48 L65.37,35.75 L66.03,36.65 L66.69,35.75 L67.35,32.48 L68.01,28.51 L68.67,27.43 L69.33,29.02 L69.99,32.56 L70.65,35.47 L71.31,36.27 L71.97,35.47 L72.63,32.56 L73.29,29.02 L73.95,27.12 L74.61,28.86 L75.27,32.74 L75.93,35.95 L76.59,36.82 L77.25,35.95 L77.91,32.74 L78.58,28.86 L79.24,25.40 L79.90,27.43 L80.56,31.96 L81.22,35.69 L81.88,36.72 L82.54,35.69 L83.20,31.96 L83.86,27.43 L84.52,25.80 L85.18,27.67 L85.84,31.83 L86.50,35.26 L87.16,36.20 L87.82,35.26 L88.48,31.83 L89.14,27.67 L89.80,25.20" fill="none" stroke="#f3bd5c" stroke-width="1.05" stroke-linejoin="round" stroke-linecap="round"/></svg><div class="ct">SYS_PG_TEMP</div><svg class="ic" style="margin-right:0.7px" viewBox="0 0 24 24"><path fill="#5580aa" d="M15 13V5a3 3 0 0 0-6 0v8a5 5 0 1 0 6 0z"/><circle cx="12" cy="17" r="4.300" fill="#31506f"/><path fill="#31506f" d="M10.800 8h2.400v8h-2.400z"/></svg><div class="cv" style="margin-top:-0.5px"><span class="v">10,7</span><span class="u">C</span></div></div>
<div class="card" style="left:426.40px;top:148.30px;width:89.80px;height:41.85px"><svg class="sp" width="89.8" height="41.85" viewBox="0 0 89.8 41.85"><path d="M0.00,38.80 L1.80,38.30 L2.60,26.50 L5.40,26.90 L6.40,39.00 L8.50,39.19 L10.60,36.65 L12.70,39.13 L14.50,39.26 L16.60,36.09 L18.70,39.05 L20.50,39.17 L22.60,37.04 L24.70,39.14 L26.50,39.23 L28.60,36.91 L30.70,39.01 L32.50,39.10 L34.60,37.21 L36.70,39.04 L38.50,39.18 L40.60,36.72 L42.70,39.21 L44.50,39.17 L46.60,36.61 L48.70,39.09 L49.60,39.00 L50.70,26.50 L52.00,37.80 L53.00,39.10 L55.09,39.17 L57.33,37.08 L59.56,39.07 L61.47,39.10 L63.70,35.86 L65.93,39.12 L67.84,39.29 L70.08,37.26 L72.31,39.26 L74.22,39.11 L76.45,36.83 L78.68,39.19 L79.60,38.80 L80.90,24.20 L82.20,35.00 L83.40,32.00 L84.60,38.30 L86.50,36.80 L88.00,39.00 L89.80,39.30 L89.80,42.85 L0,42.85 Z" fill="#fef6e7"/><path d="M0.00,38.80 L1.80,38.30 L2.60,26.50 L5.40,26.90 L6.40,39.00 L8.50,39.19 L10.60,36.65 L12.70,39.13 L14.50,39.26 L16.60,36.09 L18.70,39.05 L20.50,39.17 L22.60,37.04 L24.70,39.14 L26.50,39.23 L28.60,36.91 L30.70,39.01 L32.50,39.10 L34.60,37.21 L36.70,39.04 L38.50,39.18 L40.60,36.72 L42.70,39.21 L44.50,39.17 L46.60,36.61 L48.70,39.09 L49.60,39.00 L50.70,26.50 L52.00,37.80 L53.00,39.10 L55.09,39.17 L57.33,37.08 L59.56,39.07 L61.47,39.10 L63.70,35.86 L65.93,39.12 L67.84,39.29 L70.08,37.26 L72.31,39.26 L74.22,39.11 L76.45,36.83 L78.68,39.19 L79.60,38.80 L80.90,24.20 L82.20,35.00 L83.40,32.00 L84.60,38.30 L86.50,36.80 L88.00,39.00 L89.80,39.30" fill="none" stroke="#f3bd5c" stroke-width="1.05" stroke-linejoin="round" stroke-linecap="round"/></svg><div class="ct">IPM_TEMP</div><svg class="ic" style="margin-right:0.7px" viewBox="0 0 24 24"><path fill="#5580aa" d="M15 13V5a3 3 0 0 0-6 0v8a5 5 0 1 0 6 0z"/><circle cx="12" cy="17" r="4.300" fill="#31506f"/><path fill="#31506f" d="M10.800 8h2.400v8h-2.400z"/></svg><div class="cv" style="margin-top:-0.5px"><span class="v">15</span><span class="u">C</span></div></div>
<div class="card" style="left:519.85px;top:148.30px;width:89.80px;height:41.85px"><svg class="sp" width="89.8" height="41.85" viewBox="0 0 89.8 41.85"><path d="M0.00,25.50 L0.66,27.65 L1.32,32.43 L1.98,36.38 L2.64,37.47 L3.30,36.38 L3.96,32.43 L4.62,27.65 L5.28,27.83 L5.94,29.57 L6.60,33.45 L7.26,36.66 L7.92,37.54 L8.58,36.66 L9.24,33.45 L9.90,29.57 L10.56,27.36 L11.22,29.17 L11.89,33.21 L12.55,36.53 L13.21,37.44 L13.87,36.53 L14.53,33.21 L15.19,29.17 L15.85,27.00 L16.51,28.89 L17.17,33.09 L17.83,36.55 L18.49,37.50 L19.15,36.55 L19.81,33.09 L20.47,28.89 L21.13,27.50 L21.79,29.26 L22.45,33.17 L23.11,36.40 L23.77,37.28 L24.43,36.40 L25.09,33.17 L25.75,29.26 L26.41,26.90 L27.07,28.84 L27.73,33.14 L28.39,36.69 L29.05,37.66 L29.71,36.69 L30.37,33.14 L31.03,28.84 L31.69,26.90 L32.35,28.76 L33.01,32.91 L33.67,36.33 L34.34,37.27 L35.00,36.33 L35.66,32.91 L36.32,28.76 L36.98,27.57 L37.64,29.42 L38.30,33.54 L38.96,36.93 L39.62,37.87 L40.28,36.93 L40.94,33.54 L41.60,29.42 L42.26,27.89 L42.92,29.89 L43.58,34.33 L44.24,37.99 L44.90,39.00 L45.56,37.99 L46.22,34.33 L46.88,29.89 L47.54,27.53 L48.20,29.30 L48.86,33.26 L49.52,36.53 L50.18,37.42 L50.84,36.53 L51.50,33.26 L52.16,29.30 L52.82,26.97 L53.48,28.93 L54.14,33.30 L54.80,36.90 L55.46,37.89 L56.12,36.90 L56.79,33.30 L57.45,28.93 L58.11,27.39 L58.77,29.27 L59.43,33.45 L60.09,36.91 L60.75,37.85 L61.41,36.91 L62.07,33.45 L62.73,29.27 L63.39,27.01 L64.05,28.93 L64.71,33.21 L65.37,36.74 L66.03,37.71 L66.69,36.74 L67.35,33.21 L68.01,28.93 L68.67,26.83 L69.33,28.76 L69.99,33.04 L70.65,36.57 L71.31,37.54 L71.97,36.57 L72.63,33.04 L73.29,28.76 L73.95,25.40 L74.61,28.08 L75.27,34.04 L75.93,38.95 L76.59,40.30 L77.25,38.95 L77.91,34.04 L78.58,28.08 L79.24,25.80 L79.90,27.88 L80.56,32.52 L81.22,36.35 L81.88,37.40 L82.54,36.35 L83.20,32.52 L83.86,27.88 L84.52,27.35 L85.18,29.16 L85.84,33.17 L86.50,36.48 L87.16,37.39 L87.82,36.48 L88.48,33.17 L89.14,29.16 L89.80,25.50 L89.80,42.85 L0,42.85 Z" fill="#fef6e7"/><path d="M0.00,25.50 L0.66,27.65 L1.32,32.43 L1.98,36.38 L2.64,37.47 L3.30,36.38 L3.96,32.43 L4.62,27.65 L5.28,27.83 L5.94,29.57 L6.60,33.45 L7.26,36.66 L7.92,37.54 L8.58,36.66 L9.24,33.45 L9.90,29.57 L10.56,27.36 L11.22,29.17 L11.89,33.21 L12.55,36.53 L13.21,37.44 L13.87,36.53 L14.53,33.21 L15.19,29.17 L15.85,27.00 L16.51,28.89 L17.17,33.09 L17.83,36.55 L18.49,37.50 L19.15,36.55 L19.81,33.09 L20.47,28.89 L21.13,27.50 L21.79,29.26 L22.45,33.17 L23.11,36.40 L23.77,37.28 L24.43,36.40 L25.09,33.17 L25.75,29.26 L26.41,26.90 L27.07,28.84 L27.73,33.14 L28.39,36.69 L29.05,37.66 L29.71,36.69 L30.37,33.14 L31.03,28.84 L31.69,26.90 L32.35,28.76 L33.01,32.91 L33.67,36.33 L34.34,37.27 L35.00,36.33 L35.66,32.91 L36.32,28.76 L36.98,27.57 L37.64,29.42 L38.30,33.54 L38.96,36.93 L39.62,37.87 L40.28,36.93 L40.94,33.54 L41.60,29.42 L42.26,27.89 L42.92,29.89 L43.58,34.33 L44.24,37.99 L44.90,39.00 L45.56,37.99 L46.22,34.33 L46.88,29.89 L47.54,27.53 L48.20,29.30 L48.86,33.26 L49.52,36.53 L50.18,37.42 L50.84,36.53 L51.50,33.26 L52.16,29.30 L52.82,26.97 L53.48,28.93 L54.14,33.30 L54.80,36.90 L55.46,37.89 L56.12,36.90 L56.79,33.30 L57.45,28.93 L58.11,27.39 L58.77,29.27 L59.43,33.45 L60.09,36.91 L60.75,37.85 L61.41,36.91 L62.07,33.45 L62.73,29.27 L63.39,27.01 L64.05,28.93 L64.71,33.21 L65.37,36.74 L66.03,37.71 L66.69,36.74 L67.35,33.21 L68.01,28.93 L68.67,26.83 L69.33,28.76 L69.99,33.04 L70.65,36.57 L71.31,37.54 L71.97,36.57 L72.63,33.04 L73.29,28.76 L73.95,25.40 L74.61,28.08 L75.27,34.04 L75.93,38.95 L76.59,40.30 L77.25,38.95 L77.91,34.04 L78.58,28.08 L79.24,25.80 L79.90,27.88 L80.56,32.52 L81.22,36.35 L81.88,37.40 L82.54,36.35 L83.20,32.52 L83.86,27.88 L84.52,27.35 L85.18,29.16 L85.84,33.17 L86.50,36.48 L87.16,37.39 L87.82,36.48 L88.48,33.17 L89.14,29.16 L89.80,25.50" fill="none" stroke="#f3bd5c" stroke-width="1.05" stroke-linejoin="round" stroke-linecap="round"/></svg><div class="ct">TRAGE_FREQUENT</div><svg class="ic" viewBox="0 0 24 24"><path fill="#416690" d="M16.500 21c-3 0-4.190-4.240-5.450-8.720C10.140 9.040 9 5 7.500 5 4.110 5 4 11.930 4 12H2c0-.37.060-9 5.500-9 3 0 4.210 4.250 5.470 8.740C13.830 14.800 15 19 16.500 19c3.440 0 3.530-6.930 3.530-7h2c0 .37-.06 9-5.530 9z"/></svg><div class="cv" style="margin-top:-0.5px"><span class="v">30</span><span class="u">Hz</span></div></div>
<div class="card" style="left:613.35px;top:148.30px;width:89.80px;height:41.85px"><svg class="sp" width="89.8" height="41.85" viewBox="0 0 89.8 41.85"><path d="M0.00,38.00 L0.50,38.32 L1.71,28.42 L2.66,26.60 L3.74,26.60 L4.69,28.42 L5.90,38.17 L6.70,38.17 L7.92,30.12 L8.86,28.60 L9.94,28.60 L10.89,30.12 L12.10,38.59 L12.90,38.69 L14.11,29.77 L15.06,28.20 L16.14,28.20 L17.09,29.77 L18.30,38.40 L19.10,38.48 L20.32,30.12 L21.26,28.60 L22.34,28.60 L23.29,30.12 L24.50,38.05 L25.30,38.15 L26.52,29.86 L27.46,28.30 L28.54,28.30 L29.48,29.86 L30.70,38.22 L31.50,38.25 L32.72,30.12 L33.66,28.60 L34.74,28.60 L35.69,30.12 L36.90,38.17 L37.70,38.58 L38.91,29.95 L39.86,28.40 L40.94,28.40 L41.88,29.95 L43.10,38.35 L43.90,38.57 L45.12,29.61 L46.06,28.00 L47.14,28.00 L48.09,29.61 L49.30,37.98 L50.10,38.65 L51.31,30.12 L52.26,28.60 L53.34,28.60 L54.28,30.12 L55.50,38.04 L56.30,38.64 L57.52,29.95 L58.46,28.40 L59.54,28.40 L60.48,29.95 L61.70,38.15 L62.50,38.43 L63.72,30.62 L64.66,29.20 L65.74,29.20 L66.69,30.62 L67.90,38.38 L68.70,38.03 L69.92,30.12 L70.86,28.60 L71.94,28.60 L72.89,30.12 L74.10,38.69 L74.90,38.65 L76.11,29.09 L77.06,27.40 L78.14,27.40 L79.08,29.09 L80.30,37.97 L81.10,38.29 L82.31,28.93 L83.26,27.20 L84.34,27.20 L85.28,28.93 L86.50,38.63 L89.80,38.70 L89.80,42.85 L0,42.85 Z" fill="#fef6e7"/><path d="M0.00,38.00 L0.50,38.32 L1.71,28.42 L2.66,26.60 L3.74,26.60 L4.69,28.42 L5.90,38.17 L6.70,38.17 L7.92,30.12 L8.86,28.60 L9.94,28.60 L10.89,30.12 L12.10,38.59 L12.90,38.69 L14.11,29.77 L15.06,28.20 L16.14,28.20 L17.09,29.77 L18.30,38.40 L19.10,38.48 L20.32,30.12 L21.26,28.60 L22.34,28.60 L23.29,30.12 L24.50,38.05 L25.30,38.15 L26.52,29.86 L27.46,28.30 L28.54,28.30 L29.48,29.86 L30.70,38.22 L31.50,38.25 L32.72,30.12 L33.66,28.60 L34.74,28.60 L35.69,30.12 L36.90,38.17 L37.70,38.58 L38.91,29.95 L39.86,28.40 L40.94,28.40 L41.88,29.95 L43.10,38.35 L43.90,38.57 L45.12,29.61 L46.06,28.00 L47.14,28.00 L48.09,29.61 L49.30,37.98 L50.10,38.65 L51.31,30.12 L52.26,28.60 L53.34,28.60 L54.28,30.12 L55.50,38.04 L56.30,38.64 L57.52,29.95 L58.46,28.40 L59.54,28.40 L60.48,29.95 L61.70,38.15 L62.50,38.43 L63.72,30.62 L64.66,29.20 L65.74,29.20 L66.69,30.62 L67.90,38.38 L68.70,38.03 L69.92,30.12 L70.86,28.60 L71.94,28.60 L72.89,30.12 L74.10,38.69 L74.90,38.65 L76.11,29.09 L77.06,27.40 L78.14,27.40 L79.08,29.09 L80.30,37.97 L81.10,38.29 L82.31,28.93 L83.26,27.20 L84.34,27.20 L85.28,28.93 L86.50,38.63 L89.80,38.70" fill="none" stroke="#f3bd5c" stroke-width="1.05" stroke-linejoin="round" stroke-linecap="round"/></svg><div class="ct">RUN_FREQUENT</div><svg class="ic" viewBox="0 0 24 24"><path fill="#416690" d="M16.500 21c-3 0-4.190-4.240-5.450-8.720C10.140 9.040 9 5 7.500 5 4.110 5 4 11.930 4 12H2c0-.37.060-9 5.500-9 3 0 4.210 4.250 5.470 8.740C13.830 14.800 15 19 16.500 19c3.440 0 3.530-6.930 3.530-7h2c0 .37-.06 9-5.530 9z"/></svg><div class="cv" style="margin-top:-0.5px"><span class="v">35</span><span class="u">Hz</span></div></div>
<div class="card" style="left:706.90px;top:148.30px;width:89.80px;height:41.85px"><div class="ct">EVI_STEP</div><svg class="ic" viewBox="0 0 24 24"><path fill="#416690" d="M12 9a3 3 0 1 0 0 6 3 3 0 0 0 0-6m0 8a5 5 0 1 1 0-10 5 5 0 0 1 0 10m0-12.500C7 4.500 2.730 7.610 1 12c1.730 4.390 6 7.500 11 7.500s9.270-3.110 11-7.500c-1.730-4.390-6-7.500-11-7.500z"/></svg><div class="cv" style="margin-top:-0.5px"><span class="v">0</span></div></div>
<div class="card" style="left:239.50px;top:194.00px;width:89.80px;height:41.85px"><svg class="sp" width="89.8" height="41.85" viewBox="0 0 89.8 41.85"><path d="M0.00,25.00 L0.66,27.21 L1.32,32.14 L1.98,36.20 L2.64,37.31 L3.30,36.20 L3.96,32.14 L4.62,27.21 L5.28,28.70 L5.94,30.21 L6.60,33.57 L7.26,36.34 L7.92,37.10 L8.58,36.34 L9.24,33.57 L9.90,30.21 L10.56,28.70 L11.22,30.35 L11.89,34.03 L12.55,37.07 L13.21,37.90 L13.87,37.07 L14.53,34.03 L15.19,30.35 L15.85,29.50 L16.51,31.01 L17.17,34.37 L17.83,37.15 L18.49,37.91 L19.15,37.15 L19.81,34.37 L20.47,31.01 L21.13,29.50 L21.79,31.03 L22.45,34.44 L23.11,37.26 L23.77,38.03 L24.43,37.26 L25.09,34.44 L25.75,31.03 L26.41,29.20 L27.07,30.77 L27.73,34.26 L28.39,37.13 L29.05,37.92 L29.71,37.13 L30.37,34.26 L31.03,30.77 L31.69,29.80 L32.35,31.21 L33.01,34.34 L33.67,36.93 L34.34,37.64 L35.00,36.93 L35.66,34.34 L36.32,31.21 L36.98,29.20 L37.64,30.67 L38.30,33.96 L38.96,36.67 L39.62,37.41 L40.28,36.67 L40.94,33.96 L41.60,30.67 L42.26,29.00 L42.92,30.59 L43.58,34.13 L44.24,37.04 L44.90,37.84 L45.56,37.04 L46.22,34.13 L46.88,30.59 L47.54,25.60 L48.20,27.66 L48.86,32.25 L49.52,36.03 L50.18,37.07 L50.84,36.03 L51.50,32.25 L52.16,27.66 L52.82,28.00 L53.48,29.64 L54.14,33.31 L54.80,36.33 L55.46,37.16 L56.12,36.33 L56.79,33.31 L57.45,29.64 L58.11,26.20 L58.77,28.18 L59.43,32.60 L60.09,36.24 L60.75,37.24 L61.41,36.24 L62.07,32.60 L62.73,28.18 L63.39,29.00 L64.05,30.47 L64.71,33.74 L65.37,36.43 L66.03,37.17 L66.69,36.43 L67.35,33.74 L68.01,30.47 L68.67,28.50 L69.33,30.04 L69.99,33.48 L70.65,36.32 L71.31,37.10 L71.97,36.32 L72.63,33.48 L73.29,30.04 L73.95,25.00 L74.61,27.20 L75.27,32.08 L75.93,36.12 L76.59,37.22 L77.25,36.12 L77.91,32.08 L78.58,27.20 L79.24,27.00 L79.90,28.91 L80.56,33.17 L81.22,36.68 L81.88,37.64 L82.54,36.68 L83.20,33.17 L83.86,28.91 L84.52,28.00 L85.18,29.73 L85.84,33.59 L86.50,36.77 L87.16,37.64 L87.82,36.77 L88.48,33.59 L89.14,29.73 L89.80,25.00 L89.80,42.85 L0,42.85 Z" fill="#fef6e7"/><path d="M0.00,25.00 L0.66,27.21 L1.32,32.14 L1.98,36.20 L2.64,37.31 L3.30,36.20 L3.96,32.14 L4.62,27.21 L5.28,28.70 L5.94,30.21 L6.60,33.57 L7.26,36.34 L7.92,37.10 L8.58,36.34 L9.24,33.57 L9.90,30.21 L10.56,28.70 L11.22,30.35 L11.89,34.03 L12.55,37.07 L13.21,37.90 L13.87,37.07 L14.53,34.03 L15.19,30.35 L15.85,29.50 L16.51,31.01 L17.17,34.37 L17.83,37.15 L18.49,37.91 L19.15,37.15 L19.81,34.37 L20.47,31.01 L21.13,29.50 L21.79,31.03 L22.45,34.44 L23.11,37.26 L23.77,38.03 L24.43,37.26 L25.09,34.44 L25.75,31.03 L26.41,29.20 L27.07,30.77 L27.73,34.26 L28.39,37.13 L29.05,37.92 L29.71,37.13 L30.37,34.26 L31.03,30.77 L31.69,29.80 L32.35,31.21 L33.01,34.34 L33.67,36.93 L34.34,37.64 L35.00,36.93 L35.66,34.34 L36.32,31.21 L36.98,29.20 L37.64,30.67 L38.30,33.96 L38.96,36.67 L39.62,37.41 L40.28,36.67 L40.94,33.96 L41.60,30.67 L42.26,29.00 L42.92,30.59 L43.58,34.13 L44.24,37.04 L44.90,37.84 L45.56,37.04 L46.22,34.13 L46.88,30.59 L47.54,25.60 L48.20,27.66 L48.86,32.25 L49.52,36.03 L50.18,37.07 L50.84,36.03 L51.50,32.25 L52.16,27.66 L52.82,28.00 L53.48,29.64 L54.14,33.31 L54.80,36.33 L55.46,37.16 L56.12,36.33 L56.79,33.31 L57.45,29.64 L58.11,26.20 L58.77,28.18 L59.43,32.60 L60.09,36.24 L60.75,37.24 L61.41,36.24 L62.07,32.60 L62.73,28.18 L63.39,29.00 L64.05,30.47 L64.71,33.74 L65.37,36.43 L66.03,37.17 L66.69,36.43 L67.35,33.74 L68.01,30.47 L68.67,28.50 L69.33,30.04 L69.99,33.48 L70.65,36.32 L71.31,37.10 L71.97,36.32 L72.63,33.48 L73.29,30.04 L73.95,25.00 L74.61,27.20 L75.27,32.08 L75.93,36.12 L76.59,37.22 L77.25,36.12 L77.91,32.08 L78.58,27.20 L79.24,27.00 L79.90,28.91 L80.56,33.17 L81.22,36.68 L81.88,37.64 L82.54,36.68 L83.20,33.17 L83.86,28.91 L84.52,28.00 L85.18,29.73 L85.84,33.59 L86.50,36.77 L87.16,37.64 L87.82,36.77 L88.48,33.59 L89.14,29.73 L89.80,25.00" fill="none" stroke="#f3bd5c" stroke-width="1.05" stroke-linejoin="round" stroke-linecap="round"/></svg><div class="ct" style="margin-top:-0.6px;">MIAN_EVI_STEP</div><svg class="ic" viewBox="0 0 24 24"><path fill="#416690" d="M12 9a3 3 0 1 0 0 6 3 3 0 0 0 0-6m0 8a5 5 0 1 1 0-10 5 5 0 0 1 0 10m0-12.500C7 4.500 2.730 7.610 1 12c1.730 4.390 6 7.500 11 7.500s9.270-3.110 11-7.500c-1.730-4.390-6-7.500-11-7.500z"/></svg><div class="cv" style="margin-top:-0.6px"><span class="v">200</span></div></div>
<div class="card" style="left:332.95px;top:194.00px;width:89.80px;height:41.85px"><svg class="sp" width="89.8" height="41.85" viewBox="0 0 89.8 41.85"><path d="M0.00,39.80 L2.80,39.71 L3.88,31.47 L4.72,30.00 L5.68,30.00 L6.52,31.47 L7.60,39.24 L9.60,39.28 L10.68,33.09 L11.52,31.90 L12.48,31.90 L13.32,33.09 L14.40,39.05 L15.30,39.58 L16.38,33.09 L17.22,31.90 L18.18,31.90 L19.02,33.09 L20.10,39.60 L20.30,39.21 L21.38,33.59 L22.22,32.50 L23.18,32.50 L24.02,33.59 L25.10,39.27 L25.30,39.56 L26.38,33.09 L27.22,31.90 L28.18,31.90 L29.02,33.09 L30.10,39.25 L30.30,39.48 L31.38,32.58 L32.22,31.30 L33.18,31.30 L34.02,32.58 L35.10,39.18 L35.90,39.71 L36.98,32.58 L37.82,31.30 L38.78,31.30 L39.62,32.58 L40.70,39.62 L41.50,39.08 L42.58,32.58 L43.42,31.30 L44.38,31.30 L45.22,32.58 L46.30,39.51 L48.40,39.59 L49.48,30.45 L50.32,28.80 L51.28,28.80 L52.12,30.45 L53.20,39.16 L55.90,39.29 L56.98,31.98 L57.82,30.60 L58.78,30.60 L59.62,31.98 L60.70,39.68 L62.10,39.36 L63.18,30.96 L64.02,29.40 L64.98,29.40 L65.82,30.96 L66.90,39.27 L69.60,39.67 L70.68,31.98 L71.52,30.60 L72.48,30.60 L73.32,31.98 L74.40,39.28 L74.60,39.70 L75.68,30.45 L76.52,28.80 L77.48,28.80 L78.32,30.45 L79.40,39.53 L78.50,39.73 L79.58,27.22 L80.42,25.00 L81.38,25.00 L82.22,27.22 L83.30,39.64 L82.80,39.02 L83.88,31.98 L84.72,30.60 L85.68,30.60 L86.52,31.98 L87.60,39.48 L89.80,39.80 L89.80,42.85 L0,42.85 Z" fill="#fef6e7"/><path d="M0.00,39.80 L2.80,39.71 L3.88,31.47 L4.72,30.00 L5.68,30.00 L6.52,31.47 L7.60,39.24 L9.60,39.28 L10.68,33.09 L11.52,31.90 L12.48,31.90 L13.32,33.09 L14.40,39.05 L15.30,39.58 L16.38,33.09 L17.22,31.90 L18.18,31.90 L19.02,33.09 L20.10,39.60 L20.30,39.21 L21.38,33.59 L22.22,32.50 L23.18,32.50 L24.02,33.59 L25.10,39.27 L25.30,39.56 L26.38,33.09 L27.22,31.90 L28.18,31.90 L29.02,33.09 L30.10,39.25 L30.30,39.48 L31.38,32.58 L32.22,31.30 L33.18,31.30 L34.02,32.58 L35.10,39.18 L35.90,39.71 L36.98,32.58 L37.82,31.30 L38.78,31.30 L39.62,32.58 L40.70,39.62 L41.50,39.08 L42.58,32.58 L43.42,31.30 L44.38,31.30 L45.22,32.58 L46.30,39.51 L48.40,39.59 L49.48,30.45 L50.32,28.80 L51.28,28.80 L52.12,30.45 L53.20,39.16 L55.90,39.29 L56.98,31.98 L57.82,30.60 L58.78,30.60 L59.62,31.98 L60.70,39.68 L62.10,39.36 L63.18,30.96 L64.02,29.40 L64.98,29.40 L65.82,30.96 L66.90,39.27 L69.60,39.67 L70.68,31.98 L71.52,30.60 L72.48,30.60 L73.32,31.98 L74.40,39.28 L74.60,39.70 L75.68,30.45 L76.52,28.80 L77.48,28.80 L78.32,30.45 L79.40,39.53 L78.50,39.73 L79.58,27.22 L80.42,25.00 L81.38,25.00 L82.22,27.22 L83.30,39.64 L82.80,39.02 L83.88,31.98 L84.72,30.60 L85.68,30.60 L86.52,31.98 L87.60,39.48 L89.80,39.80" fill="none" stroke="#f3bd5c" stroke-width="1.05" stroke-linejoin="round" stroke-linecap="round"/></svg><div class="ct" style="margin-top:-0.6px;">SYS_PQ_TEMP</div><svg class="ic" style="margin-right:0.7px" viewBox="0 0 24 24"><path fill="#5580aa" d="M15 13V5a3 3 0 0 0-6 0v8a5 5 0 1 0 6 0z"/><circle cx="12" cy="17" r="4.300" fill="#31506f"/><path fill="#31506f" d="M10.800 8h2.400v8h-2.400z"/></svg><div class="cv" style="margin-top:-0.6px"><span class="v">31,0</span><span class="u">C</span></div></div>
<div class="card" style="left:426.40px;top:194.00px;width:89.80px;height:41.85px"><svg class="sp" width="89.8" height="41.85" viewBox="0 0 89.8 41.85"><path d="M0.00,38.80 L1.80,38.30 L2.60,25.50 L5.40,25.90 L6.40,39.00 L8.50,39.11 L10.60,36.83 L12.70,39.08 L14.50,39.27 L16.60,35.12 L18.70,39.29 L20.50,39.12 L22.60,35.66 L24.70,39.04 L26.50,39.10 L28.60,36.43 L30.70,39.20 L32.50,39.16 L34.60,36.36 L36.70,39.22 L38.50,39.25 L40.60,35.35 L42.70,39.04 L44.50,39.14 L46.60,36.46 L48.70,39.02 L49.60,39.00 L50.70,25.00 L52.00,37.80 L53.00,39.10 L55.09,39.20 L57.33,36.45 L59.56,39.16 L61.47,39.22 L63.70,36.71 L65.93,39.13 L67.84,39.23 L70.08,35.85 L72.31,39.02 L74.22,39.17 L76.45,36.14 L78.68,39.04 L79.60,38.80 L80.90,24.60 L82.20,36.00 L83.40,33.00 L84.60,38.30 L86.50,36.80 L88.00,39.00 L89.80,39.30 L89.80,42.85 L0,42.85 Z" fill="#fef6e7"/><path d="M0.00,38.80 L1.80,38.30 L2.60,25.50 L5.40,25.90 L6.40,39.00 L8.50,39.11 L10.60,36.83 L12.70,39.08 L14.50,39.27 L16.60,35.12 L18.70,39.29 L20.50,39.12 L22.60,35.66 L24.70,39.04 L26.50,39.10 L28.60,36.43 L30.70,39.20 L32.50,39.16 L34.60,36.36 L36.70,39.22 L38.50,39.25 L40.60,35.35 L42.70,39.04 L44.50,39.14 L46.60,36.46 L48.70,39.02 L49.60,39.00 L50.70,25.00 L52.00,37.80 L53.00,39.10 L55.09,39.20 L57.33,36.45 L59.56,39.16 L61.47,39.22 L63.70,36.71 L65.93,39.13 L67.84,39.23 L70.08,35.85 L72.31,39.02 L74.22,39.17 L76.45,36.14 L78.68,39.04 L79.60,38.80 L80.90,24.60 L82.20,36.00 L83.40,33.00 L84.60,38.30 L86.50,36.80 L88.00,39.00 L89.80,39.30" fill="none" stroke="#f3bd5c" stroke-width="1.05" stroke-linejoin="round" stroke-linecap="round"/></svg><div class="ct" style="margin-top:-0.6px;">SYS_JIEL_TEMP</div><svg class="ic" style="margin-right:0.7px" viewBox="0 0 24 24"><path fill="#5580aa" d="M15 13V5a3 3 0 0 0-6 0v8a5 5 0 1 0 6 0z"/><circle cx="12" cy="17" r="4.300" fill="#31506f"/><path fill="#31506f" d="M10.800 8h2.400v8h-2.400z"/></svg><div class="cv" style="margin-top:-0.6px"><span class="v">25,5</span><span class="u">C</span></div></div>
<div class="card" style="left:426.40px;top:262.00px;width:89.80px;height:42.80px"><svg class="sp" width="89.8" height="41.85" viewBox="0 0 89.8 41.85"><path d="M0.00,38.00 L2.40,34.76 L4.00,37.02 L5.60,37.44 L7.40,35.08 L9.00,36.59 L10.60,37.55 L12.40,35.41 L14.00,36.86 L15.60,37.35 L17.40,34.84 L19.00,36.40 L20.60,37.26 L22.40,35.19 L24.00,36.46 L25.60,37.56 L27.40,34.83 L29.00,36.61 L30.60,37.03 L32.40,35.60 L34.00,37.06 L35.60,37.61 L37.40,35.22 L39.00,36.43 L40.60,37.23 L42.40,35.10 L44.00,36.50 L45.60,37.67 L47.40,34.97 L49.00,36.54 L50.60,32.50 L52.40,37.00 L54.00,37.24 L55.60,37.32 L57.40,35.15 L59.00,36.71 L60.60,37.34 L62.40,34.79 L64.00,36.43 L65.60,37.61 L67.40,34.83 L69.00,37.10 L70.60,37.15 L72.40,35.57 L74.00,37.20 L75.60,37.53 L77.40,35.36 L79.00,36.92 L81.00,36.80 L81.90,41.20 L83.10,28.10 L84.30,37.50 L85.60,36.80 L87.50,35.20 L89.00,37.23 L89.80,35.60 L90.60,37.62 L89.80,42.85 L0,42.85 Z" fill="#fef6e7"/><path d="M0.00,38.00 L2.40,34.76 L4.00,37.02 L5.60,37.44 L7.40,35.08 L9.00,36.59 L10.60,37.55 L12.40,35.41 L14.00,36.86 L15.60,37.35 L17.40,34.84 L19.00,36.40 L20.60,37.26 L22.40,35.19 L24.00,36.46 L25.60,37.56 L27.40,34.83 L29.00,36.61 L30.60,37.03 L32.40,35.60 L34.00,37.06 L35.60,37.61 L37.40,35.22 L39.00,36.43 L40.60,37.23 L42.40,35.10 L44.00,36.50 L45.60,37.67 L47.40,34.97 L49.00,36.54 L50.60,32.50 L52.40,37.00 L54.00,37.24 L55.60,37.32 L57.40,35.15 L59.00,36.71 L60.60,37.34 L62.40,34.79 L64.00,36.43 L65.60,37.61 L67.40,34.83 L69.00,37.10 L70.60,37.15 L72.40,35.57 L74.00,37.20 L75.60,37.53 L77.40,35.36 L79.00,36.92 L81.00,36.80 L81.90,41.20 L83.10,28.10 L84.30,37.50 L85.60,36.80 L87.50,35.20 L89.00,37.23 L89.80,35.60 L90.60,37.62" fill="none" stroke="#f3bd5c" stroke-width="1.05" stroke-linejoin="round" stroke-linecap="round"/></svg><div class="ct" style="font-size:5.78px;">Delta-T</div><svg class="ic" style="margin-right:0.7px" viewBox="0 0 24 24"><path fill="#5580aa" d="M15 13V5a3 3 0 0 0-6 0v8a5 5 0 1 0 6 0z"/><circle cx="12" cy="17" r="4.300" fill="#31506f"/><path fill="#31506f" d="M10.800 8h2.400v8h-2.400z"/></svg><div class="cv"><span class="v">2,9</span><span class="u">C</span></div></div>
<div class="card" style="left:519.85px;top:262.00px;width:89.80px;height:42.80px"><svg class="sp" width="89.8" height="41.85" viewBox="0 0 89.8 41.85"><path d="M0.00,40.50 L1.90,39.35 L2.67,38.46 L3.26,38.10 L3.94,38.10 L4.54,38.46 L5.30,40.33 L6.30,40.47 L7.06,37.44 L7.66,36.90 L8.34,36.90 L8.94,37.44 L9.70,39.30 L10.05,40.28 L10.81,35.83 L11.41,35.00 L12.09,35.00 L12.69,35.83 L13.45,40.36 L13.20,39.72 L13.96,36.34 L14.56,35.60 L15.24,35.60 L15.84,36.34 L16.60,40.09 L17.55,39.43 L18.32,37.95 L18.91,37.50 L19.59,37.50 L20.18,37.95 L20.95,40.22 L21.30,39.35 L22.07,34.21 L22.66,33.10 L23.34,33.10 L23.93,34.21 L24.70,40.12 L25.70,39.78 L26.46,35.83 L27.06,35.00 L27.74,35.00 L28.33,35.83 L29.10,39.38 L30.05,39.68 L30.82,37.44 L31.41,36.90 L32.09,36.90 L32.69,37.44 L33.45,39.39 L34.40,39.65 L35.16,36.34 L35.76,35.60 L36.44,35.60 L37.04,36.34 L37.80,40.44 L38.20,39.44 L38.96,37.44 L39.56,36.90 L40.24,36.90 L40.84,37.44 L41.60,39.79 L41.90,40.13 L42.66,37.44 L43.26,36.90 L43.94,36.90 L44.54,37.44 L45.30,40.27 L49.40,39.48 L50.16,30.51 L50.76,28.75 L51.44,28.75 L52.04,30.51 L52.80,39.80 L55.70,39.37 L56.46,35.31 L57.06,34.40 L57.74,34.40 L58.34,35.31 L59.10,39.57 L60.70,39.35 L61.46,34.21 L62.06,33.10 L62.74,33.10 L63.34,34.21 L64.10,39.82 L64.40,39.66 L65.16,35.83 L65.76,35.00 L66.44,35.00 L67.03,35.83 L67.80,39.77 L69.40,40.19 L70.16,32.64 L70.76,31.25 L71.44,31.25 L72.03,32.64 L72.80,39.35 L73.20,40.13 L73.97,35.83 L74.56,35.00 L75.24,35.00 L75.84,35.83 L76.60,39.56 L77.55,39.35 L78.31,31.06 L78.91,29.40 L79.59,29.40 L80.19,31.06 L80.95,39.72 L80.70,40.33 L81.47,32.64 L82.06,31.25 L82.74,31.25 L83.34,32.64 L84.10,39.51 L84.40,39.70 L85.16,35.31 L85.76,34.40 L86.44,34.40 L87.03,35.31 L87.80,40.28 L89.80,40.50 L89.80,42.85 L0,42.85 Z" fill="#fef6e7"/><path d="M0.00,40.50 L1.90,39.35 L2.67,38.46 L3.26,38.10 L3.94,38.10 L4.54,38.46 L5.30,40.33 L6.30,40.47 L7.06,37.44 L7.66,36.90 L8.34,36.90 L8.94,37.44 L9.70,39.30 L10.05,40.28 L10.81,35.83 L11.41,35.00 L12.09,35.00 L12.69,35.83 L13.45,40.36 L13.20,39.72 L13.96,36.34 L14.56,35.60 L15.24,35.60 L15.84,36.34 L16.60,40.09 L17.55,39.43 L18.32,37.95 L18.91,37.50 L19.59,37.50 L20.18,37.95 L20.95,40.22 L21.30,39.35 L22.07,34.21 L22.66,33.10 L23.34,33.10 L23.93,34.21 L24.70,40.12 L25.70,39.78 L26.46,35.83 L27.06,35.00 L27.74,35.00 L28.33,35.83 L29.10,39.38 L30.05,39.68 L30.82,37.44 L31.41,36.90 L32.09,36.90 L32.69,37.44 L33.45,39.39 L34.40,39.65 L35.16,36.34 L35.76,35.60 L36.44,35.60 L37.04,36.34 L37.80,40.44 L38.20,39.44 L38.96,37.44 L39.56,36.90 L40.24,36.90 L40.84,37.44 L41.60,39.79 L41.90,40.13 L42.66,37.44 L43.26,36.90 L43.94,36.90 L44.54,37.44 L45.30,40.27 L49.40,39.48 L50.16,30.51 L50.76,28.75 L51.44,28.75 L52.04,30.51 L52.80,39.80 L55.70,39.37 L56.46,35.31 L57.06,34.40 L57.74,34.40 L58.34,35.31 L59.10,39.57 L60.70,39.35 L61.46,34.21 L62.06,33.10 L62.74,33.10 L63.34,34.21 L64.10,39.82 L64.40,39.66 L65.16,35.83 L65.76,35.00 L66.44,35.00 L67.03,35.83 L67.80,39.77 L69.40,40.19 L70.16,32.64 L70.76,31.25 L71.44,31.25 L72.03,32.64 L72.80,39.35 L73.20,40.13 L73.97,35.83 L74.56,35.00 L75.24,35.00 L75.84,35.83 L76.60,39.56 L77.55,39.35 L78.31,31.06 L78.91,29.40 L79.59,29.40 L80.19,31.06 L80.95,39.72 L80.70,40.33 L81.47,32.64 L82.06,31.25 L82.74,31.25 L83.34,32.64 L84.10,39.51 L84.40,39.70 L85.16,35.31 L85.76,34.40 L86.44,34.40 L87.03,35.31 L87.80,40.28 L89.80,40.50" fill="none" stroke="#f3bd5c" stroke-width="1.05" stroke-linejoin="round" stroke-linecap="round"/></svg><div class="ct" style="font-size:5.78px;">Warmtepomp COP Live</div><svg class="ic" viewBox="0 0 24 24"><path fill="#416690" d="M12 9a3 3 0 1 0 0 6 3 3 0 0 0 0-6m0 8a5 5 0 1 1 0-10 5 5 0 0 1 0 10m0-12.500C7 4.500 2.730 7.610 1 12c1.730 4.390 6 7.500 11 7.500s9.270-3.110 11-7.500c-1.730-4.390-6-7.500-11-7.500z"/></svg><div class="cv"><span class="v">7,1</span><span class="u">COP</span></div></div>
<div class="card" style="left:613.35px;top:262.00px;width:89.80px;height:42.80px"><svg class="sp" width="89.8" height="41.85" viewBox="0 0 89.8 41.85"><path d="M0.00,39.50 L2.20,39.19 L3.05,28.36 L3.72,26.25 L4.48,26.25 L5.14,28.36 L6.00,39.16 L9.10,39.23 L9.96,33.67 L10.62,32.50 L11.38,32.50 L12.04,33.67 L12.90,40.20 L13.50,39.59 L14.36,35.28 L15.02,34.40 L15.78,34.40 L16.45,35.28 L17.30,39.79 L17.85,39.66 L18.70,35.80 L19.37,35.00 L20.13,35.00 L20.80,35.80 L21.65,40.14 L22.20,40.07 L23.05,36.30 L23.72,35.60 L24.48,35.60 L25.15,36.30 L26.00,39.77 L26.60,40.03 L27.45,35.28 L28.12,34.40 L28.88,34.40 L29.55,35.28 L30.40,39.75 L31.00,40.27 L31.85,35.80 L32.52,35.00 L33.28,35.00 L33.95,35.80 L34.80,40.20 L35.35,39.45 L36.20,35.28 L36.87,34.40 L37.63,34.40 L38.30,35.28 L39.15,39.79 L39.10,39.68 L39.95,34.73 L40.62,33.75 L41.38,33.75 L42.05,34.73 L42.90,39.42 L42.85,39.87 L43.70,34.18 L44.37,33.10 L45.13,33.10 L45.80,34.18 L46.65,40.23 L46.60,39.36 L47.45,31.54 L48.12,30.00 L48.88,30.00 L49.55,31.54 L50.40,39.59 L53.50,39.51 L54.35,35.80 L55.02,35.00 L55.78,35.00 L56.45,35.80 L57.30,39.55 L58.50,39.14 L59.35,34.73 L60.02,33.75 L60.78,33.75 L61.45,34.73 L62.30,39.86 L62.85,39.39 L63.70,33.67 L64.37,32.50 L65.13,32.50 L65.80,33.67 L66.65,39.86 L67.20,39.61 L68.05,35.80 L68.72,35.00 L69.48,35.00 L70.14,35.80 L71.00,39.51 L70.00,39.92 L70.86,33.16 L71.52,31.90 L72.28,31.90 L72.95,33.16 L73.80,40.20 L77.20,39.73 L78.05,27.80 L78.72,25.60 L79.48,25.60 L80.14,27.80 L81.00,39.44 L82.20,39.59 L83.05,33.67 L83.72,32.50 L84.48,32.50 L85.14,33.67 L86.00,39.76 L85.00,39.53 L85.86,35.28 L86.52,34.40 L87.28,34.40 L87.95,35.28 L88.80,40.08 L89.80,40.30 L89.80,42.85 L0,42.85 Z" fill="#fef6e7"/><path d="M0.00,39.50 L2.20,39.19 L3.05,28.36 L3.72,26.25 L4.48,26.25 L5.14,28.36 L6.00,39.16 L9.10,39.23 L9.96,33.67 L10.62,32.50 L11.38,32.50 L12.04,33.67 L12.90,40.20 L13.50,39.59 L14.36,35.28 L15.02,34.40 L15.78,34.40 L16.45,35.28 L17.30,39.79 L17.85,39.66 L18.70,35.80 L19.37,35.00 L20.13,35.00 L20.80,35.80 L21.65,40.14 L22.20,40.07 L23.05,36.30 L23.72,35.60 L24.48,35.60 L25.15,36.30 L26.00,39.77 L26.60,40.03 L27.45,35.28 L28.12,34.40 L28.88,34.40 L29.55,35.28 L30.40,39.75 L31.00,40.27 L31.85,35.80 L32.52,35.00 L33.28,35.00 L33.95,35.80 L34.80,40.20 L35.35,39.45 L36.20,35.28 L36.87,34.40 L37.63,34.40 L38.30,35.28 L39.15,39.79 L39.10,39.68 L39.95,34.73 L40.62,33.75 L41.38,33.75 L42.05,34.73 L42.90,39.42 L42.85,39.87 L43.70,34.18 L44.37,33.10 L45.13,33.10 L45.80,34.18 L46.65,40.23 L46.60,39.36 L47.45,31.54 L48.12,30.00 L48.88,30.00 L49.55,31.54 L50.40,39.59 L53.50,39.51 L54.35,35.80 L55.02,35.00 L55.78,35.00 L56.45,35.80 L57.30,39.55 L58.50,39.14 L59.35,34.73 L60.02,33.75 L60.78,33.75 L61.45,34.73 L62.30,39.86 L62.85,39.39 L63.70,33.67 L64.37,32.50 L65.13,32.50 L65.80,33.67 L66.65,39.86 L67.20,39.61 L68.05,35.80 L68.72,35.00 L69.48,35.00 L70.14,35.80 L71.00,39.51 L70.00,39.92 L70.86,33.16 L71.52,31.90 L72.28,31.90 L72.95,33.16 L73.80,40.20 L77.20,39.73 L78.05,27.80 L78.72,25.60 L79.48,25.60 L80.14,27.80 L81.00,39.44 L82.20,39.59 L83.05,33.67 L83.72,32.50 L84.48,32.50 L85.14,33.67 L86.00,39.76 L85.00,39.53 L85.86,35.28 L86.52,34.40 L87.28,34.40 L87.95,35.28 L88.80,40.08 L89.80,40.30" fill="none" stroke="#f3bd5c" stroke-width="1.05" stroke-linejoin="round" stroke-linecap="round"/></svg><div class="ct" style="font-size:5.78px;">Power Consumption (calc)</div><svg class="ic" viewBox="0 0 24 24"><path fill="#38557a" d="M7 2v11h3v9l7-12h-4l4-8H7z"/></svg><div class="cv"><span class="v">951</span><span class="u">W</span></div></div>
<div class="card" style="left:706.90px;top:262.00px;width:89.80px;height:42.80px"><svg class="sp" width="89.8" height="41.85" viewBox="0 0 89.8 41.85"><path d="M0.00,43.00 L2.45,41.25 L7.35,38.80 L19.60,36.35 L31.90,34.50 L44.10,33.00 L49.00,32.70 L51.50,31.10 L63.70,29.40 L76.00,28.10 L80.90,25.70 L84.60,24.95 L89.80,25.20 L89.80,42.85 L0,42.85 Z" fill="#fef6e7"/><path d="M0.00,43.00 L2.45,41.25 L7.35,38.80 L19.60,36.35 L31.90,34.50 L44.10,33.00 L49.00,32.70 L51.50,31.10 L63.70,29.40 L76.00,28.10 L80.90,25.70 L84.60,24.95 L89.80,25.20" fill="none" stroke="#f3bd5c" stroke-width="1.05" stroke-linejoin="round" stroke-linecap="round"/></svg><div class="ct" style="font-size:5.78px;">Last 24hrs</div><svg class="ic" viewBox="0 0 24 24"><path fill="#416690" d="M11 15H6l7-14v8h5l-7 14v-8z"/></svg><div class="cv"><span class="v">7,56344</span><span class="u">kWh</span></div></div>
<div class="card ng" style="left:426.40px;top:308.30px;width:89.80px;height:41.95px"><div class="ct" style="font-size:5.78px;margin-top:-0.6px;">Power Usage Heatpump</div><svg class="ic" viewBox="0 0 24 24"><path fill="#6b9fd0" d="M4 4h16a2 2 0 0 1 2 2v12a2 2 0 0 1-2 2H4a2 2 0 0 1-2-2V6a2 2 0 0 1 2-2m0 2v12h7V6H4m16 12V6h-7v12h7M6 9h3v6H6zm9 0h3v6h-3z"/></svg><div class="cv"><span class="v">4,25</span><span class="u">kWh</span></div></div>
<div class="card ng" style="left:519.85px;top:308.30px;width:89.80px;height:41.95px"><div class="ct" style="font-size:5.6px;margin-top:-0.6px;">Total kWh per day (Riema...</div><svg class="ic" viewBox="0 0 24 24"><path fill="#416690" d="M11 15H6l7-14v8h5l-7 14v-8z"/></svg><div class="cv"><span class="v">4,25</span><span class="u">kWh</span></div></div>
<div class="card" style="left:239.50px;top:33.60px;width:89.80px;height:43.00px"><svg class="ti" viewBox="0 0 24 24"><path fill="#36496d" d="M1 10.800h22v2.600H1z"/><circle cx="12" cy="12.100" r="2.900" fill="#2c3f63"/></svg><div class="tn">SET_TANK_TEMP</div><div class="ts">50</div></div>
<div class="card" style="left:332.95px;top:33.60px;width:89.80px;height:43.00px"><svg class="ti" viewBox="0 0 24 24"><path fill="#36496d" d="M1 10.800h22v2.600H1z"/><circle cx="12" cy="12.100" r="2.900" fill="#2c3f63"/></svg><div class="tn">Set Heating Temperature</div><div class="ts">38</div></div>
<div class="card" style="left:239.50px;top:262.00px;width:89.80px;height:88.25px"><svg class="g" width="90" height="88" viewBox="0 0 90 88"><path d="M7.80,59.35 A37.2,37.2 0 0 1 46.95,22.20 L46.33,33.88 A25.5,25.5 0 0 0 19.50,59.35 Z" fill="#43a047"/><path d="M46.95,22.20 A37.2,37.2 0 0 1 74.71,36.96 L65.37,44.00 A25.5,25.5 0 0 0 46.33,33.88 Z" fill="#ffa600"/><path d="M74.71,36.96 A37.2,37.2 0 0 1 82.20,59.35 L70.50,59.35 A25.5,25.5 0 0 0 65.37,44.00 Z" fill="#db4437"/><path d="M18.60,33.86 L32.36,44.37 L29.58,47.24 Z" fill="#212121"/></svg><div class="gv" style="letter-spacing:0px">951 W</div><div class="gl">Realtime Power Consumption</div></div>
<div class="card" style="left:332.95px;top:262.00px;width:89.80px;height:88.25px"><svg class="g" width="90" height="88" viewBox="0 0 90 88"><path d="M7.80,59.35 A37.2,37.2 0 0 1 26.40,27.13 L32.25,37.27 A25.5,25.5 0 0 0 19.50,59.35 Z" fill="#43a047"/><path d="M26.40,27.13 A37.2,37.2 0 0 1 45.00,22.15 L45.00,33.85 A25.5,25.5 0 0 0 32.25,37.27 Z" fill="#ffa600"/><path d="M45.00,22.15 A37.2,37.2 0 0 1 82.20,59.35 L70.50,59.35 A25.5,25.5 0 0 0 45.00,33.85 Z" fill="#db4437"/><path d="M8.59,54.75 L25.90,54.92 L25.40,58.89 Z" fill="#212121"/></svg><div class="gv" style="letter-spacing:-0.65px">3,15 kW</div><div class="gl">Yesterday Powerconsumption</div></div>
<div class="card" style="left:239.50px;top:376.20px;width:276.70px;height:111.20px"><div class="cht">COP warmtepomp - LIVE</div><svg class="chs" width="276.7" height="111.2" viewBox="0 0 276.7 111.2"><line x1="14.7" x2="269.9" y1="29.10" y2="29.10" stroke="#e4e4e4" stroke-width="0.4"/><text x="11.8" y="31.00" text-anchor="end" class="ax">18</text><line x1="14.7" x2="269.9" y1="38.42" y2="38.42" stroke="#e4e4e4" stroke-width="0.4"/><text x="11.8" y="40.32" text-anchor="end" class="ax">15</text><line x1="14.7" x2="269.9" y1="47.74" y2="47.74" stroke="#e4e4e4" stroke-width="0.4"/><text x="11.8" y="49.64" text-anchor="end" class="ax">12</text><line x1="14.7" x2="269.9" y1="57.06" y2="57.06" stroke="#e4e4e4" stroke-width="0.4"/><text x="11.8" y="58.96" text-anchor="end" class="ax">9</text><line x1="14.7" x2="269.9" y1="66.38" y2="66.38" stroke="#e4e4e4" stroke-width="0.4"/><text x="11.8" y="68.28" text-anchor="end" class="ax">6</text><line x1="14.7" x2="269.9" y1="75.70" y2="75.70" stroke="#e4e4e4" stroke-width="0.4"/><text x="11.8" y="77.60" text-anchor="end" class="ax">3</text><line x1="14.7" x2="269.9" y1="85.02" y2="85.02" stroke="#e4e4e4" stroke-width="0.4"/><text x="11.8" y="86.92" text-anchor="end" class="ax">0</text><text x="15.9" y="27.90" class="ax2">COP</text><line x1="14.7" x2="14.7" y1="29.1" y2="85.02" stroke="#d0d0d0" stroke-width="0.4"/><line x1="66.10" x2="66.10" y1="29.1" y2="85.02" stroke="#e4e4e4" stroke-width="0.4"/><text x="66.10" y="91.62" text-anchor="middle" class="ax2">29</text><line x1="191.10" x2="191.10" y1="29.1" y2="85.02" stroke="#e4e4e4" stroke-width="0.4"/><text x="191.10" y="91.62" text-anchor="middle" class="ax2">30</text><line x1="269.9" x2="269.9" y1="29.1" y2="85.02" stroke="#e4e4e4" stroke-width="0.4"/><line x1="110.30" x2="110.30" y1="85.35" y2="51.18" stroke="#97aadc" stroke-width="0.55"/><line x1="116.10" x2="116.10" y1="85.35" y2="61.74" stroke="#97aadc" stroke-width="0.55"/><line x1="177.20" x2="177.20" y1="85.35" y2="55.53" stroke="#97aadc" stroke-width="0.55"/><line x1="183.70" x2="183.70" y1="85.35" y2="56.15" stroke="#97aadc" stroke-width="0.55"/><line x1="216.90" x2="216.90" y1="85.35" y2="44.34" stroke="#97aadc" stroke-width="0.55"/><line x1="218.20" x2="218.20" y1="85.35" y2="57.39" stroke="#97aadc" stroke-width="0.55"/><line x1="244.50" x2="244.50" y1="85.35" y2="53.66" stroke="#97aadc" stroke-width="0.55"/><line x1="258.20" x2="258.20" y1="85.35" y2="39.99" stroke="#97aadc" stroke-width="0.55"/><line x1="264.20" x2="264.20" y1="85.35" y2="56.15" stroke="#97aadc" stroke-width="0.55"/><line x1="226.70" x2="226.70" y1="85.35" y2="58.01" stroke="#97aadc" stroke-width="0.55"/><line x1="160.40" x2="160.40" y1="85.35" y2="58.01" stroke="#97aadc" stroke-width="0.55"/><path d="M14.70,85.35 L15.85,85.35 L16.30,64.47 L16.60,59.25 L17.35,63.17 L17.75,85.35 L108.35,85.35 L108.80,70.44 L109.30,66.71 L110.25,69.51 L110.65,85.35 L114.25,85.35 L114.70,67.95 L115.20,63.60 L116.15,66.87 L116.55,85.35 L121.55,85.35 L122.00,65.72 L122.50,60.81 L123.45,64.49 L123.85,85.35 L131.25,85.35 L131.70,65.47 L132.20,60.50 L133.15,64.22 L133.55,85.35 L139.55,85.35 L140.00,65.22 L140.50,60.19 L141.45,63.96 L141.85,85.35 L152.55,85.35 L153.00,65.47 L153.50,60.50 L154.45,64.22 L154.85,85.35 L158.75,85.35 L159.20,65.47 L159.70,60.50 L160.65,64.22 L161.05,85.35 L166.35,85.35 L166.80,65.47 L167.30,60.50 L168.25,64.22 L168.65,85.35 L174.35,85.35 L174.80,65.22 L175.30,60.19 L176.25,63.96 L176.65,85.35 L181.85,85.35 L182.30,64.97 L182.80,59.88 L183.75,63.70 L184.15,85.35 L188.85,85.35 L189.30,65.47 L189.80,60.50 L190.75,64.22 L191.15,85.35 L196.35,85.35 L196.80,65.47 L197.30,60.50 L198.25,64.22 L198.65,85.35 L203.85,85.35 L204.30,65.47 L204.80,60.50 L205.75,64.22 L206.15,85.35 L215.95,85.35 L216.40,65.47 L216.90,60.50 L217.85,64.22 L218.25,85.35 L225.05,85.35 L225.50,65.47 L226.00,60.50 L226.95,64.22 L227.35,85.35 L232.55,85.35 L233.00,65.47 L233.50,60.50 L234.45,64.22 L234.85,85.35 L242.55,85.35 L243.00,64.97 L243.50,59.88 L244.45,63.70 L244.85,85.35 L257.05,85.35 L257.50,64.97 L258.00,59.88 L258.95,63.70 L259.35,85.35 L262.65,85.35 L263.10,65.47 L263.60,60.50 L264.55,64.22 L264.95,85.35 L269.90,85.35" fill="#c3cfee" stroke="#5472b8" stroke-width="0.95" stroke-linejoin="round"/><rect x="22.90" y="84.55" width="2.20" height="1.600" fill="#fff"/><rect x="44.30" y="84.55" width="5.80" height="1.600" fill="#fff"/><path d="M148.20,85.35 L148.40,71.06 L149.40,77.27 L151.40,79.14 L152.90,80.38" fill="none" stroke="#5472b8" stroke-width="0.9"/><path d="M212.90,85.35 L213.30,74.79 L214.90,76.65 L216.30,77.89" fill="none" stroke="#5472b8" stroke-width="0.9"/><path d="M251.70,85.35 L252.20,61.12 L253.10,66.09 L254.40,69.82 L255.70,74.17 L256.20,85.35" fill="none" stroke="#5472b8" stroke-width="0.9"/></svg><i class="ld" style="left:33.1px;background:#97aadc"></i><span class="lt" style="left:40.7px">Warmtepomp COP Live (min)</span><i class="ld" style="left:100.1px;background:#4468c4"></i><span class="lt" style="left:107.7px">Warmtepomp COP Live (gemiddeld)</span><i class="ld" style="left:179.4px;background:#97aadc"></i><span class="lt" style="left:187.0px">Warmtepomp COP Live (max)</span></div>
<div class="card" style="left:519.85px;top:376.20px;width:276.85px;height:111.20px"><div class="cht">Delta-T IN-UIT WP</div><svg class="chs" width="276.85" height="111.2" viewBox="0 0 276.85 111.2"><line x1="15.85" x2="271.05" y1="29.55" y2="29.55" stroke="#e4e4e4" stroke-width="0.4"/><text x="12.95" y="31.45" text-anchor="end" class="ax">15</text><line x1="15.85" x2="271.05" y1="40.65" y2="40.65" stroke="#e4e4e4" stroke-width="0.4"/><text x="12.95" y="42.55" text-anchor="end" class="ax">10</text><line x1="15.85" x2="271.05" y1="51.75" y2="51.75" stroke="#e4e4e4" stroke-width="0.4"/><text x="12.95" y="53.65" text-anchor="end" class="ax">5</text><line x1="15.85" x2="271.05" y1="62.85" y2="62.85" stroke="#e4e4e4" stroke-width="0.4"/><text x="12.95" y="64.75" text-anchor="end" class="ax">0</text><line x1="15.85" x2="271.05" y1="73.95" y2="73.95" stroke="#e4e4e4" stroke-width="0.4"/><text x="12.95" y="75.85" text-anchor="end" class="ax">-5</text><line x1="15.85" x2="271.05" y1="85.05" y2="85.05" stroke="#e4e4e4" stroke-width="0.4"/><text x="12.95" y="86.95" text-anchor="end" class="ax">-10</text><text x="17.05" y="28.35" class="ax2">°C</text><line x1="15.85" x2="15.85" y1="29.55" y2="85.05" stroke="#d0d0d0" stroke-width="0.4"/><line x1="66.15" x2="66.15" y1="29.55" y2="85.05" stroke="#e4e4e4" stroke-width="0.4"/><text x="66.15" y="91.65" text-anchor="middle" class="ax2">29</text><line x1="192.05" x2="192.05" y1="29.55" y2="85.05" stroke="#e4e4e4" stroke-width="0.4"/><text x="192.05" y="91.65" text-anchor="middle" class="ax2">30</text><line x1="271.05" x2="271.05" y1="29.55" y2="85.05" stroke="#e4e4e4" stroke-width="0.4"/><line x1="26.55" x2="26.55" y1="78.64" y2="56.00" stroke="#97aadc" stroke-width="0.55"/><line x1="24.15" x2="24.15" y1="73.76" y2="63.10" stroke="#97aadc" stroke-width="0.55"/><line x1="148.35" x2="148.35" y1="72.42" y2="61.99" stroke="#97aadc" stroke-width="0.55"/><line x1="153.35" x2="153.35" y1="64.21" y2="48.45" stroke="#97aadc" stroke-width="0.55"/><line x1="151.85" x2="151.85" y1="63.10" y2="56.44" stroke="#97aadc" stroke-width="0.55"/><line x1="214.55" x2="214.55" y1="70.65" y2="60.88" stroke="#97aadc" stroke-width="0.55"/><line x1="216.55" x2="216.55" y1="64.21" y2="47.56" stroke="#97aadc" stroke-width="0.55"/><line x1="240.35" x2="240.35" y1="71.09" y2="61.99" stroke="#97aadc" stroke-width="0.55"/><line x1="241.85" x2="241.85" y1="67.54" y2="57.55" stroke="#97aadc" stroke-width="0.55"/><line x1="254.55" x2="254.55" y1="68.65" y2="56.44" stroke="#97aadc" stroke-width="0.55"/><line x1="258.15" x2="258.15" y1="65.32" y2="48.89" stroke="#97aadc" stroke-width="0.55"/><line x1="260.85" x2="260.85" y1="77.75" y2="32.02" stroke="#97aadc" stroke-width="0.55"/><line x1="259.75" x2="259.75" y1="65.32" y2="49.78" stroke="#97aadc" stroke-width="0.55"/><line x1="262.15" x2="262.15" y1="65.32" y2="50.89" stroke="#97aadc" stroke-width="0.55"/><line x1="252.05" x2="252.05" y1="63.10" y2="55.11" stroke="#97aadc" stroke-width="0.55"/><line x1="253.55" x2="253.55" y1="63.10" y2="55.55" stroke="#97aadc" stroke-width="0.55"/><path d="M16.05,63.10 L16.95,61.77 L17.75,57.33 L18.55,60.44 L19.55,63.10 L20.75,63.54 L21.75,68.65 L22.55,73.09 L24.05,73.31" fill="none" stroke="#5472b8" stroke-width="0.95" stroke-linejoin="round"/><path d="M25.55,62.66 L28.15,62.43 L28.75,71.98 L41.55,71.98 L42.15,62.43 L43.55,62.43" fill="none" stroke="#5472b8" stroke-width="0.95" stroke-linejoin="round"/><path d="M50.85,63.10 L108.92,63.10 L109.28,58.22 L109.95,57.11 L111.03,57.99 L111.38,63.10 L114.53,63.10 L114.88,58.22 L115.55,57.11 L116.63,57.99 L116.98,63.10 L122.53,63.10 L122.88,58.22 L123.55,57.11 L124.63,57.99 L124.98,63.10 L132.32,63.10 L132.67,58.22 L133.35,57.11 L134.42,57.99 L134.78,63.10 L139.92,63.10 L140.28,58.22 L140.95,57.11 L142.03,57.99 L142.38,63.10 L148.82,63.10 L149.17,58.22 L149.85,57.11 L150.92,57.99 L151.28,63.10 L154.92,63.10 L155.28,58.22 L155.95,57.11 L157.03,57.99 L157.38,63.10 L159.32,63.10 L159.67,58.22 L160.35,57.11 L161.42,57.99 L161.78,63.10 L166.12,63.10 L166.47,58.22 L167.15,57.11 L168.22,57.99 L168.57,63.10 L174.92,63.10 L175.28,58.22 L175.95,57.11 L177.03,57.99 L177.38,63.10 L181.92,63.10 L182.28,58.22 L182.95,57.11 L184.03,57.99 L184.38,63.10 L188.72,63.10 L189.07,58.22 L189.75,57.11 L190.82,57.99 L191.17,63.10 L196.53,63.10 L196.88,58.22 L197.55,57.11 L198.63,57.99 L198.98,63.10 L204.72,63.10 L205.07,58.22 L205.75,57.11 L206.82,57.99 L207.17,63.10 L218.53,63.10 L218.88,58.22 L219.55,57.11 L220.63,57.99 L220.98,63.10 L226.12,63.10 L226.47,58.22 L227.15,57.11 L228.22,57.99 L228.57,63.10 L233.53,63.10 L233.88,58.22 L234.55,57.11 L235.63,57.99 L235.98,63.10 L243.53,63.10 L243.88,58.22 L244.55,57.11 L245.63,57.99 L245.98,63.10 L251.12,63.10 L251.47,58.22 L252.15,57.11 L253.22,57.99 L253.57,63.10 L256.32,63.10 L256.67,58.22 L257.35,57.11 L258.42,57.99 L258.77,63.10 L262.92,63.10 L263.27,58.22 L263.95,57.11 L265.02,57.99 L265.38,63.10 L270.35,63.10" fill="none" stroke="#5472b8" stroke-width="0.95" stroke-linejoin="round"/></svg><i class="ld" style="left:79.5px;background:#97aadc"></i><span class="lt" style="left:87.1px">Delta-T (min)</span><i class="ld" style="left:115.5px;background:#4468c4"></i><span class="lt" style="left:123.1px">Delta-T (gemiddeld)</span><i class="ld" style="left:164.5px;background:#97aadc"></i><span class="lt" style="left:172.1px">Delta-T (max)</span></div>
</div></body></html>
